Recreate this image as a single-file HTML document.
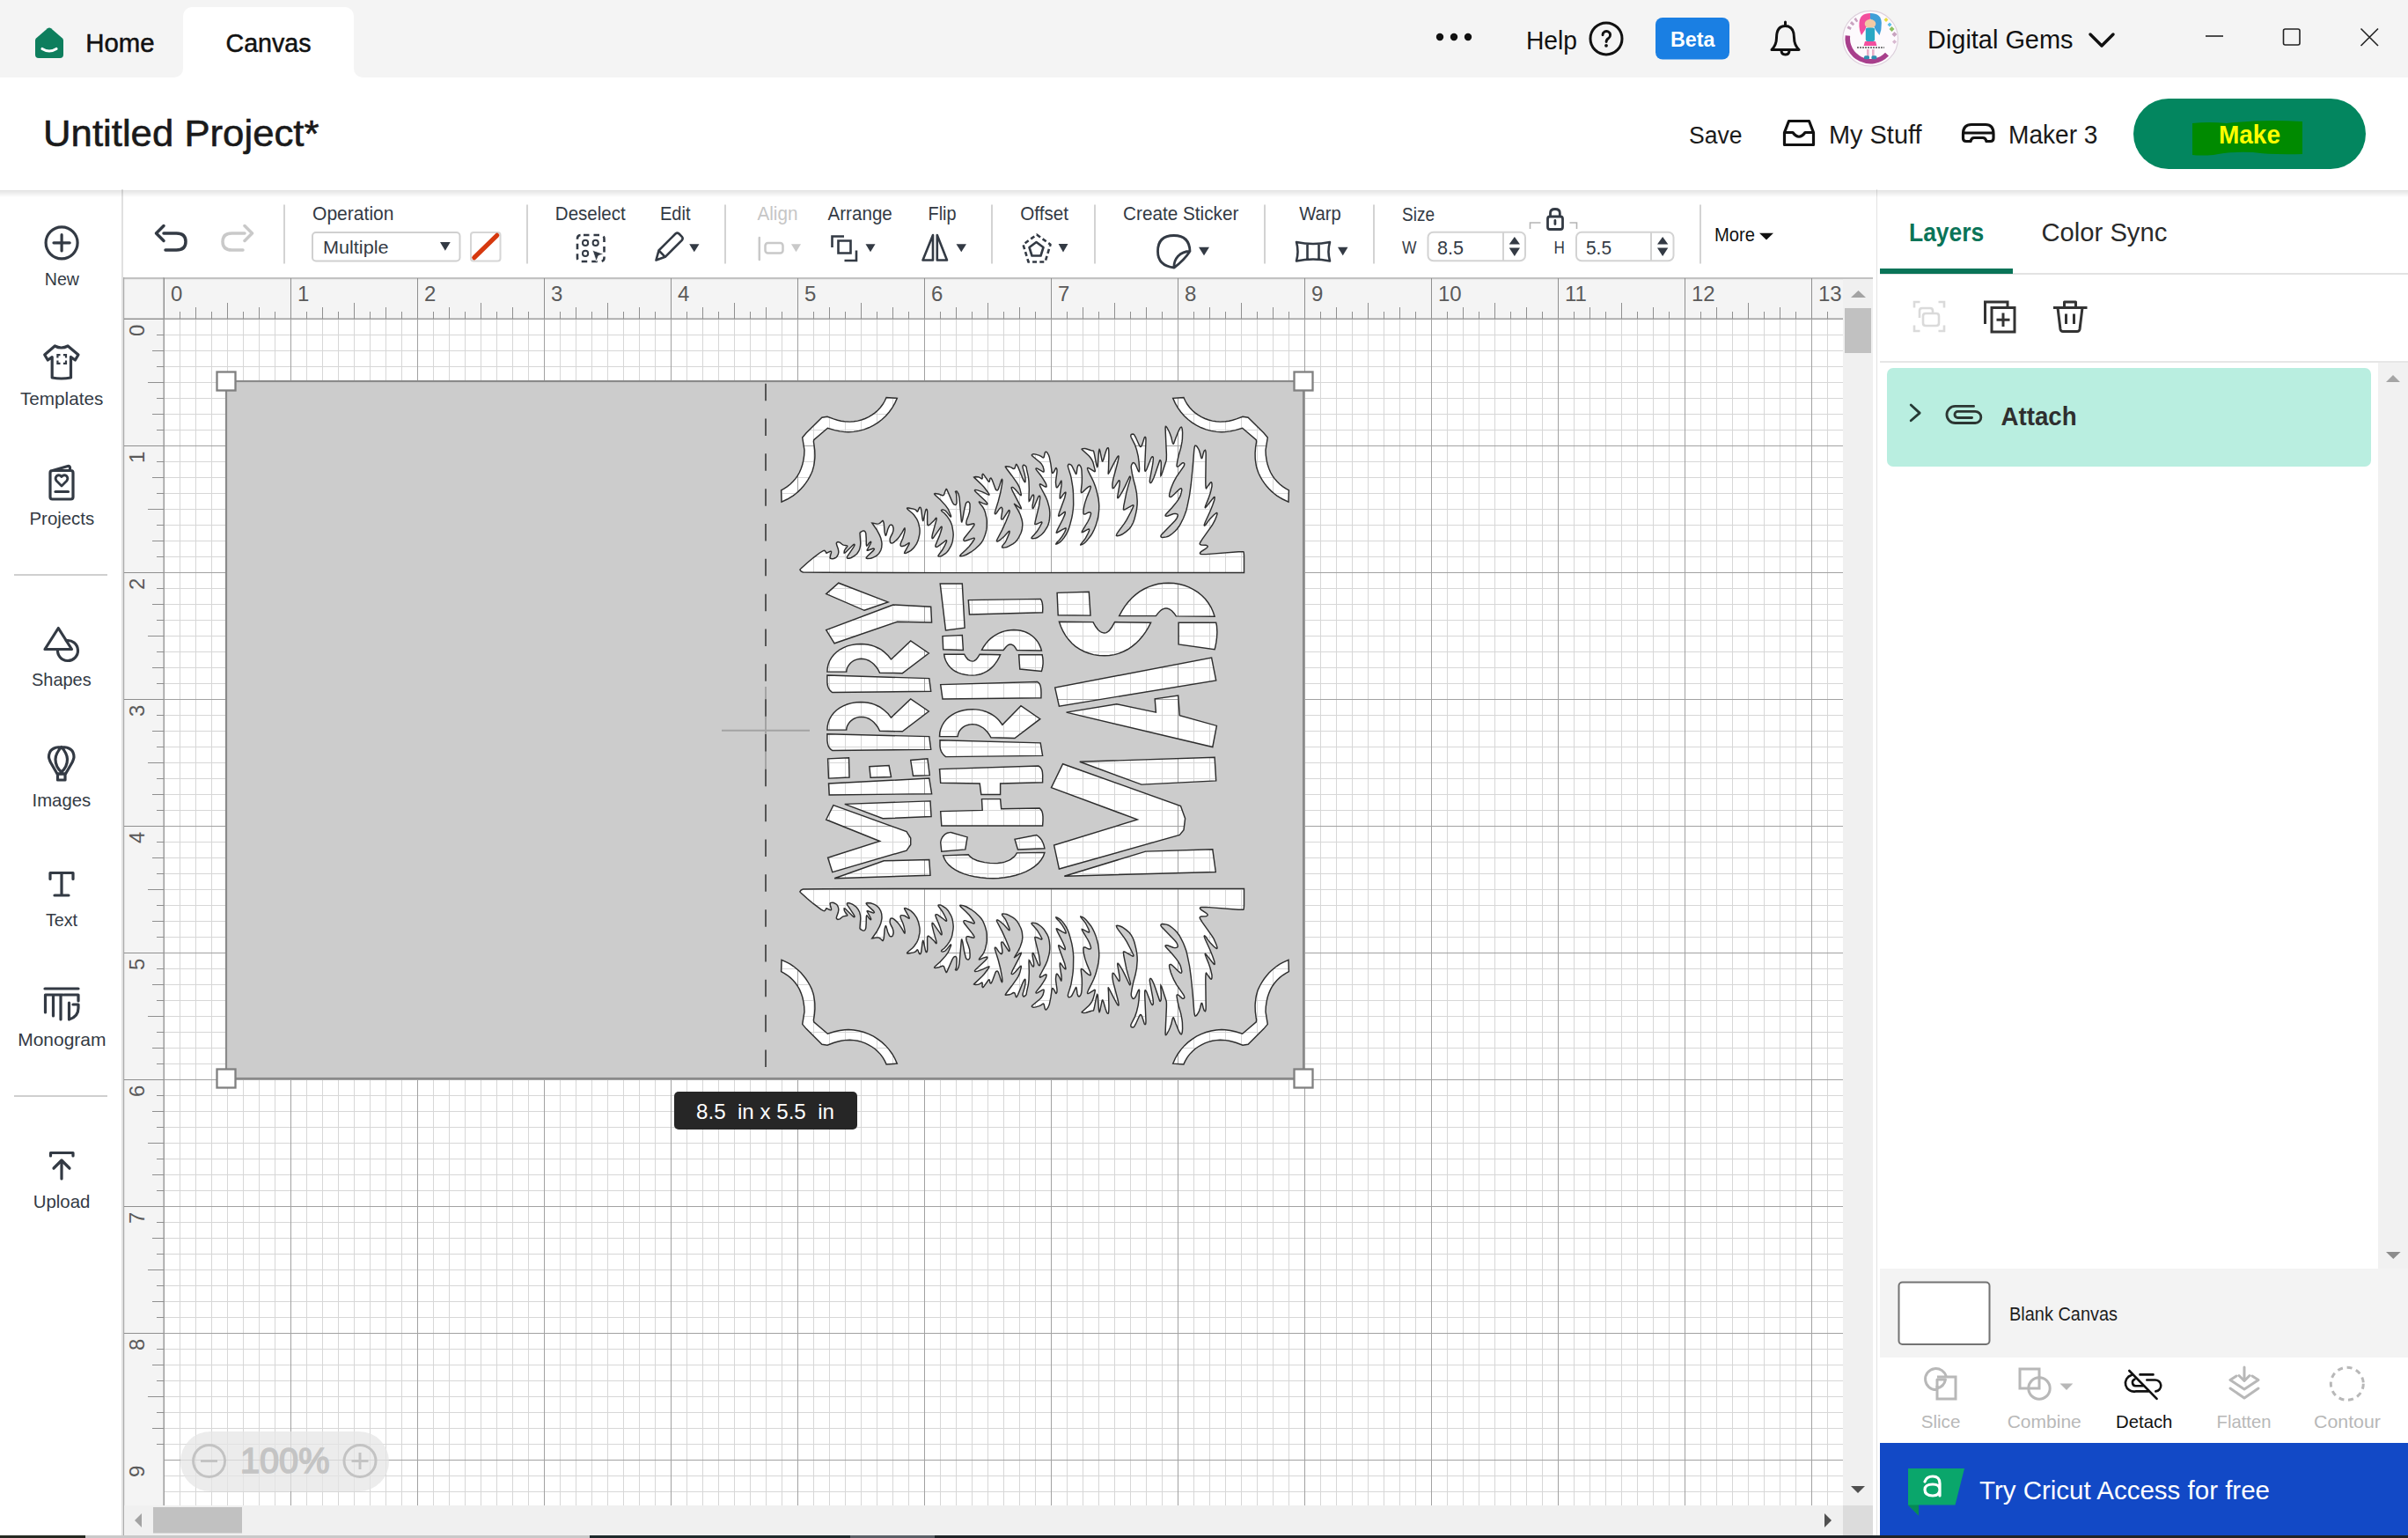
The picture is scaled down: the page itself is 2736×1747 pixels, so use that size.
<!DOCTYPE html>
<html><head><meta charset="utf-8"><title>Cricut Design Space - Canvas</title>
<style>
html,body{margin:0;padding:0;width:2736px;height:1747px;overflow:hidden;background:#fff;font-family:"Liberation Sans",sans-serif;}
.a{position:absolute;box-sizing:border-box;}
svg.full{position:absolute;left:0;top:0;}
svg text{font-family:"Liberation Sans",sans-serif;}
</style></head><body>

<div class="a" style="left:0;top:0;width:2736px;height:88px;background:#f4f4f4"></div>
<div class="a" style="left:208px;top:8px;width:194px;height:81px;background:#fff;border-radius:10px 10px 0 0"></div>
<div class="a" style="left:0;top:88px;width:2736px;height:127px;background:#fff"></div>
<div class="a" style="left:198px;top:78px;width:10px;height:10px;background:#fff"></div><div class="a" style="left:188px;top:68px;width:20px;height:20px;background:#f4f4f4;border-radius:50%"></div><div class="a" style="left:402px;top:78px;width:10px;height:10px;background:#fff"></div><div class="a" style="left:402px;top:68px;width:20px;height:20px;background:#f4f4f4;border-radius:50%"></div>
<div class="a" style="left:0;top:215px;width:140px;height:1532px;background:#fff;border-right:2px solid #e0e0e0"></div>
<div class="a" style="left:141px;top:215px;width:1991px;height:100px;background:#fff"></div>
<div class="a" style="left:2132px;top:215px;width:604px;height:1532px;background:#fff;border-left:1px solid #e2e2e2"></div>
<div class="a" style="left:0;top:216px;width:2736px;height:8px;background:linear-gradient(rgba(0,0,0,0.11),rgba(0,0,0,0))"></div>
<svg class="full" width="2736" height="1747" viewBox="0 0 2736 1747" style="position:absolute;left:0;top:0">
<defs>
<pattern id="minor" x="186" y="362" width="18" height="18" patternUnits="userSpaceOnUse"><path d="M0,0.5H18M0.5,0V18" stroke="#d7d7d7" stroke-width="1" fill="none"/></pattern>
<pattern id="major" x="186" y="362" width="144" height="144" patternUnits="userSpaceOnUse"><path d="M0,0.5H144M0.5,0V144" stroke="#a2a2a2" stroke-width="1" fill="none"/></pattern>
</defs>
<rect x="186" y="362" width="1908" height="1348" fill="#fff"/>
<rect x="186" y="362" width="1908" height="1348" fill="url(#minor)"/>
<rect x="186" y="362" width="1908" height="1348" fill="url(#major)"/>
<rect x="141" y="315" width="1953" height="47" fill="#f4f4f4"/>
<rect x="141" y="362" width="45" height="1348" fill="#f4f4f4"/>
<rect x="140" y="315" width="1988" height="2.2" fill="#c2c2c2"/>
<rect x="140" y="315" width="1.2" height="1429" fill="#ababab"/>
<rect x="141" y="361.5" width="1953" height="1" fill="#9a9a9a"/>
<rect x="185.5" y="315" width="1" height="1395" fill="#9a9a9a"/>
<path d="M186.5,316V362M204.5,354V362M222.5,349V362M240.5,354V362M258.5,344V362M276.5,354V362M294.5,349V362M312.5,354V362M330.5,316V362M348.5,354V362M366.5,349V362M384.5,354V362M402.5,344V362M420.5,354V362M438.5,349V362M456.5,354V362M474.5,316V362M492.5,354V362M510.5,349V362M528.5,354V362M546.5,344V362M564.5,354V362M582.5,349V362M600.5,354V362M618.5,316V362M636.5,354V362M654.5,349V362M672.5,354V362M690.5,344V362M708.5,354V362M726.5,349V362M744.5,354V362M762.5,316V362M780.5,354V362M798.5,349V362M816.5,354V362M834.5,344V362M852.5,354V362M870.5,349V362M888.5,354V362M906.5,316V362M924.5,354V362M942.5,349V362M960.5,354V362M978.5,344V362M996.5,354V362M1014.5,349V362M1032.5,354V362M1050.5,316V362M1068.5,354V362M1086.5,349V362M1104.5,354V362M1122.5,344V362M1140.5,354V362M1158.5,349V362M1176.5,354V362M1194.5,316V362M1212.5,354V362M1230.5,349V362M1248.5,354V362M1266.5,344V362M1284.5,354V362M1302.5,349V362M1320.5,354V362M1338.5,316V362M1356.5,354V362M1374.5,349V362M1392.5,354V362M1410.5,344V362M1428.5,354V362M1446.5,349V362M1464.5,354V362M1482.5,316V362M1500.5,354V362M1518.5,349V362M1536.5,354V362M1554.5,344V362M1572.5,354V362M1590.5,349V362M1608.5,354V362M1626.5,316V362M1644.5,354V362M1662.5,349V362M1680.5,354V362M1698.5,344V362M1716.5,354V362M1734.5,349V362M1752.5,354V362M1770.5,316V362M1788.5,354V362M1806.5,349V362M1824.5,354V362M1842.5,344V362M1860.5,354V362M1878.5,349V362M1896.5,354V362M1914.5,316V362M1932.5,354V362M1950.5,349V362M1968.5,354V362M1986.5,344V362M2004.5,354V362M2022.5,349V362M2040.5,354V362M2058.5,316V362M2076.5,354V362M2094.5,349V362M141,362.5H186M178,380.5H186M173,398.5H186M178,416.5H186M168,434.5H186M178,452.5H186M173,470.5H186M178,488.5H186M141,506.5H186M178,524.5H186M173,542.5H186M178,560.5H186M168,578.5H186M178,596.5H186M173,614.5H186M178,632.5H186M141,650.5H186M178,668.5H186M173,686.5H186M178,704.5H186M168,722.5H186M178,740.5H186M173,758.5H186M178,776.5H186M141,794.5H186M178,812.5H186M173,830.5H186M178,848.5H186M168,866.5H186M178,884.5H186M173,902.5H186M178,920.5H186M141,938.5H186M178,956.5H186M173,974.5H186M178,992.5H186M168,1010.5H186M178,1028.5H186M173,1046.5H186M178,1064.5H186M141,1082.5H186M178,1100.5H186M173,1118.5H186M178,1136.5H186M168,1154.5H186M178,1172.5H186M173,1190.5H186M178,1208.5H186M141,1226.5H186M178,1244.5H186M173,1262.5H186M178,1280.5H186M168,1298.5H186M178,1316.5H186M173,1334.5H186M178,1352.5H186M141,1370.5H186M178,1388.5H186M173,1406.5H186M178,1424.5H186M168,1442.5H186M178,1460.5H186M173,1478.5H186M178,1496.5H186M141,1514.5H186M178,1532.5H186M173,1550.5H186M178,1568.5H186M168,1586.5H186M178,1604.5H186M173,1622.5H186M178,1640.5H186" stroke="#8f8f8f" stroke-width="1" fill="none"/>
<text x="194.0" y="341.5" font-size="23.98" fill="#5a5a5a" font-weight="normal" >0</text>
<text x="338.0" y="341.5" font-size="23.98" fill="#5a5a5a" font-weight="normal" >1</text>
<text x="482.0" y="341.5" font-size="23.98" fill="#5a5a5a" font-weight="normal" >2</text>
<text x="626.0" y="341.5" font-size="23.98" fill="#5a5a5a" font-weight="normal" >3</text>
<text x="770.0" y="341.5" font-size="23.98" fill="#5a5a5a" font-weight="normal" >4</text>
<text x="914.0" y="341.5" font-size="23.98" fill="#5a5a5a" font-weight="normal" >5</text>
<text x="1058.0" y="341.5" font-size="23.98" fill="#5a5a5a" font-weight="normal" >6</text>
<text x="1202.0" y="341.5" font-size="23.98" fill="#5a5a5a" font-weight="normal" >7</text>
<text x="1346.0" y="341.5" font-size="23.98" fill="#5a5a5a" font-weight="normal" >8</text>
<text x="1490.0" y="341.5" font-size="23.98" fill="#5a5a5a" font-weight="normal" >9</text>
<text x="1634.0" y="341.5" font-size="23.98" fill="#5a5a5a" font-weight="normal" >10</text>
<text x="1778.0" y="341.5" font-size="23.98" fill="#5a5a5a" font-weight="normal" >11</text>
<text x="1922.0" y="341.5" font-size="23.98" fill="#5a5a5a" font-weight="normal" >12</text>
<text x="2066.0" y="341.5" font-size="23.98" fill="#5a5a5a" font-weight="normal" >13</text>
<g transform="translate(164,382) rotate(-90)"><text x="0.0" y="0.0" font-size="23.98" fill="#5a5a5a" font-weight="normal" >0</text></g>
<g transform="translate(164,526) rotate(-90)"><text x="0.0" y="0.0" font-size="23.98" fill="#5a5a5a" font-weight="normal" >1</text></g>
<g transform="translate(164,670) rotate(-90)"><text x="0.0" y="0.0" font-size="23.98" fill="#5a5a5a" font-weight="normal" >2</text></g>
<g transform="translate(164,814) rotate(-90)"><text x="0.0" y="0.0" font-size="23.98" fill="#5a5a5a" font-weight="normal" >3</text></g>
<g transform="translate(164,958) rotate(-90)"><text x="0.0" y="0.0" font-size="23.98" fill="#5a5a5a" font-weight="normal" >4</text></g>
<g transform="translate(164,1102) rotate(-90)"><text x="0.0" y="0.0" font-size="23.98" fill="#5a5a5a" font-weight="normal" >5</text></g>
<g transform="translate(164,1246) rotate(-90)"><text x="0.0" y="0.0" font-size="23.98" fill="#5a5a5a" font-weight="normal" >6</text></g>
<g transform="translate(164,1390) rotate(-90)"><text x="0.0" y="0.0" font-size="23.98" fill="#5a5a5a" font-weight="normal" >7</text></g>
<g transform="translate(164,1534) rotate(-90)"><text x="0.0" y="0.0" font-size="23.98" fill="#5a5a5a" font-weight="normal" >8</text></g>
<g transform="translate(164,1678) rotate(-90)"><text x="0.0" y="0.0" font-size="23.98" fill="#5a5a5a" font-weight="normal" >9</text></g>
<rect x="2094" y="317" width="34" height="1393" fill="#f0f0f0"/>
<path d="M2103,338 L2111.5,330 L2120,338Z" fill="#a3a3a3"/>
<rect x="2096" y="350" width="30" height="51" fill="#c1c1c1"/>
<path d="M2103,1688 L2119,1688 L2111,1696Z" fill="#505050"/>
<rect x="141" y="1710" width="1953" height="34" fill="#f0f0f0"/>
<path d="M161,1719 L161,1735 L153,1727Z" fill="#a3a3a3"/>
<rect x="174" y="1712" width="101" height="29.5" fill="#c1c1c1"/>
<path d="M2073,1719 L2073,1735 L2081,1727Z" fill="#505050"/>
<rect x="2094" y="1710" width="34" height="34" fill="#dcdcdc"/>
<path d="M257,433H1481V1225H257Z M901.1,563.1 904.2,560.7 907.2,558.1 910.1,555.3 912.8,552.2 915.4,548.9 917.8,545.3 920.1,541.4 922.1,537.3 923.1,534.8 924.6,529.4 925.1,526.6 925.8,520.6 925.9,517.6 925.7,511.3 924.9,505.0 924.4,501.8 924.7,499.6 940.4,486.2 948.4,488.6 954.2,489.9 960.0,490.6 964.0,490.8 970.1,490.4 976.0,489.4 981.7,487.9 987.2,485.8 992.5,483.2 997.4,480.1 1002.1,476.5 1006.4,472.5 1010.3,468.0 1013.8,463.2 1016.8,457.9 1019.3,452.3 1007.1,451.5 1005.2,455.5 1003.0,459.3 1000.4,462.8 997.4,466.0 994.2,468.9 990.6,471.4 986.9,473.6 982.9,475.5 978.7,477.0 974.5,478.1 970.1,478.8 965.6,479.1 959.6,478.8 955.6,478.2 951.5,477.2 947.2,475.9 940.0,473.2 933.9,474.2 916.1,491.8 911.7,497.0 914.0,511.3 913.7,517.1 912.9,522.6 911.8,527.6 910.2,532.3 908.4,536.5 906.2,540.4 903.7,543.9 900.9,547.1 897.9,550.0 894.6,552.6 891.2,554.8 887.6,556.8 888.0,570.1 894.6,567.0 901.1,563.1ZM982.0,693.3 1009.0,683.9 952.8,662.2 938.7,674.6 982.0,693.3ZM1014.8,687.0 938.7,715.6 948.1,730.8 1019.5,706.2 1058.6,706.9 1057.7,689.3 1014.8,687.0ZM965.4,754.3 966.8,752.8 968.4,751.5 970.1,750.4 972.0,749.6 974.1,748.9 976.2,748.5 978.5,748.3 980.9,748.5 983.2,748.9 985.4,749.6 987.4,750.5 991.2,753.0 992.9,754.5 995.9,758.0 997.3,760.0 999.6,764.3 1025.4,764.7 1055.3,742.0 1034.7,728.0 1012.5,749.0 1009.1,744.7 1004.7,740.6 1002.2,738.7 999.5,737.0 996.5,735.5 993.3,734.1 989.9,733.0 986.3,732.2 982.5,731.7 978.5,731.5 972.9,731.8 967.5,732.6 962.6,733.9 958.1,735.8 954.0,738.0 950.4,740.7 947.3,743.7 944.7,747.1 942.6,750.7 941.1,754.6 940.2,758.8 939.9,763.1 961.7,763.1 961.9,761.2 962.4,759.3 963.2,757.5 964.2,755.8 965.4,754.3ZM940.8,780.2 941.8,782.4 943.1,784.3 944.8,785.9 945.8,786.5 1057.7,785.3 1055.8,770.6 939.9,767.1 939.9,775.1 940.2,777.8 940.8,780.2ZM964.2,821.9 965.4,820.3 966.8,818.8 968.4,817.6 970.1,816.5 972.0,815.6 974.1,814.9 976.2,814.5 978.5,814.4 980.9,814.5 983.2,814.9 985.4,815.6 987.4,816.5 991.2,819.0 992.9,820.5 995.9,824.0 997.3,826.0 999.6,830.3 1025.4,830.8 1055.3,808.0 1034.7,794.0 1012.5,815.1 1009.1,810.8 1004.7,806.7 1002.2,804.8 999.5,803.0 996.5,801.5 993.3,800.1 989.9,799.0 986.3,798.2 982.5,797.7 978.5,797.5 972.9,797.8 967.5,798.6 962.6,800.0 958.1,801.8 954.0,804.1 950.4,806.7 947.3,809.8 944.7,813.1 942.6,816.8 941.1,820.7 940.2,824.8 939.9,829.1 961.7,829.1 961.9,827.2 962.4,825.3 963.2,823.6 964.2,821.9ZM940.5,845.1 941.2,847.4 942.4,849.5 943.9,851.2 945.8,852.5 1057.7,851.4 1055.8,836.6 939.9,833.8 939.9,841.1 940.5,845.1ZM941.5,884.1 965.0,883.0 964.5,860.7 940.6,861.9 941.5,884.1ZM1012.5,882.5 1010.1,869.6 987.9,870.8 989.1,883.2 1012.5,882.5ZM1058.6,901.7 1055.8,884.1 941.5,890.0 942.2,902.9 1058.6,901.7ZM1003.1,929.8 1058.1,927.5 1057.0,909.9 959.8,913.4 1003.1,929.8ZM1034.7,959.5 1034.7,952.0 1030.0,944.5 946.9,914.6 938.7,931.0 999.6,955.5 940.6,974.3 945.8,990.7 1030.0,966.1 1034.7,959.5ZM1057.0,994.2 1055.8,976.6 1004.3,977.8 948.1,997.7 1057.0,994.2ZM906.2,1120.0 908.4,1123.9 910.2,1128.1 911.8,1132.8 912.9,1137.8 913.7,1143.3 914.0,1149.1 911.7,1163.4 916.1,1168.6 933.9,1186.2 940.0,1187.2 947.2,1184.5 951.5,1183.2 955.6,1182.2 959.6,1181.6 965.6,1181.3 970.1,1181.6 974.5,1182.3 978.7,1183.4 982.9,1184.9 986.9,1186.8 990.6,1189.0 994.2,1191.5 997.4,1194.4 1000.4,1197.6 1003.0,1201.1 1005.2,1204.9 1007.1,1208.9 1019.3,1208.1 1016.8,1202.5 1013.8,1197.2 1010.3,1192.4 1006.4,1187.9 1002.1,1183.9 997.4,1180.3 992.5,1177.2 987.2,1174.6 981.7,1172.5 976.0,1171.0 970.1,1170.0 964.0,1169.6 960.0,1169.8 954.2,1170.5 948.4,1171.8 940.4,1174.2 924.7,1160.8 924.4,1158.6 925.4,1152.2 925.9,1145.9 925.8,1139.8 925.5,1136.8 924.6,1131.0 923.9,1128.3 922.1,1123.1 920.1,1119.0 917.8,1115.1 915.4,1111.5 912.8,1108.2 910.1,1105.1 907.2,1102.3 904.2,1099.7 901.1,1097.3 897.9,1095.2 894.6,1093.4 888.0,1090.3 887.6,1103.6 891.2,1105.6 894.6,1107.8 897.9,1110.4 900.9,1113.3 903.7,1116.5 906.2,1120.0ZM908.7,646.6 909.9,648.6 911.4,649.5 912.6,650.1 937.5,650.3 1085.4,650.6 1413.5,650.5 1413.5,631.4 1413.3,628.5 1413.1,627.2 1412.7,626.8 1407.2,626.8 1370.4,629.6 1367.2,629.6 1364.9,629.5 1363.8,629.1 1363.4,628.4 1363.7,627.7 1364.7,626.6 1369.3,623.6 1370.9,622.5 1371.9,621.4 1372.2,620.7 1371.8,620.0 1371.2,619.6 1370.1,619.3 1364.9,619.0 1363.9,618.7 1363.4,618.3 1363.2,617.6 1363.5,616.6 1365.9,612.6 1377.6,596.2 1380.3,591.2 1381.8,587.6 1383.0,583.9 1383.0,583.0 1382.6,582.5 1382.0,582.6 1379.3,584.7 1375.0,589.2 1373.4,591.1 1369.8,596.2 1369.0,596.9 1368.6,597.1 1368.2,596.7 1368.4,595.6 1369.3,593.3 1375.0,580.8 1377.7,574.1 1379.7,568.2 1380.2,565.4 1380.0,564.6 1379.7,564.5 1379.0,565.0 1370.5,575.8 1369.4,576.6 1369.2,576.3 1369.4,575.4 1370.1,573.4 1373.0,566.4 1375.1,560.3 1375.8,557.7 1377.0,552.3 1377.0,549.3 1376.6,548.2 1376.3,547.8 1375.7,548.0 1375.0,548.6 1373.1,551.2 1370.6,554.9 1370.2,554.4 1369.9,551.4 1369.8,546.7 1370.2,516.7 1370.1,513.8 1369.8,511.9 1369.4,511.3 1368.6,511.7 1368.1,512.4 1367.0,515.8 1366.2,519.2 1365.7,520.5 1365.1,520.5 1364.6,519.2 1363.8,515.8 1362.5,511.6 1361.8,510.0 1359.9,507.1 1359.1,506.4 1358.6,506.1 1357.8,506.1 1357.3,507.4 1356.8,510.6 1355.3,529.3 1354.1,542.0 1353.2,550.7 1351.5,562.8 1349.0,575.2 1347.8,580.0 1346.1,584.8 1344.5,588.8 1341.8,594.1 1339.9,597.5 1337.5,600.7 1335.2,603.2 1331.8,606.2 1329.6,607.9 1327.2,609.3 1325.2,609.9 1322.6,610.3 1321.1,610.4 1319.9,610.3 1319.3,609.9 1318.9,609.1 1319.0,608.4 1319.8,607.2 1334.8,591.8 1336.4,589.8 1337.4,588.2 1338.1,586.3 1338.3,585.2 1338.0,584.3 1337.3,583.9 1335.8,583.5 1334.5,583.4 1332.9,583.7 1327.0,586.0 1325.7,586.3 1324.9,586.3 1324.1,585.9 1324.1,585.3 1324.7,584.3 1331.8,576.5 1336.8,570.4 1338.6,567.8 1340.2,565.2 1341.2,562.9 1342.1,559.9 1342.8,556.7 1342.7,555.8 1342.4,555.0 1341.9,554.8 1341.3,554.9 1340.5,555.4 1338.1,557.5 1333.0,562.5 1331.6,563.7 1330.5,564.5 1329.7,564.6 1328.9,564.2 1328.6,563.6 1328.6,562.2 1328.9,560.5 1330.3,555.3 1332.2,550.5 1333.7,547.1 1336.7,541.6 1344.7,530.2 1345.4,528.9 1345.8,527.1 1345.7,526.5 1345.3,526.1 1344.6,525.7 1343.9,525.8 1343.0,526.2 1339.6,529.3 1338.8,529.9 1338.1,530.1 1337.4,530.1 1337.1,529.6 1337.1,528.1 1337.4,526.0 1338.1,522.2 1339.5,516.2 1341.7,508.6 1343.0,501.9 1343.4,498.7 1343.6,491.5 1343.3,487.6 1342.6,485.4 1342.2,485.1 1341.7,485.3 1341.0,486.0 1339.4,488.8 1336.0,497.2 1333.7,503.6 1333.2,504.3 1332.6,503.9 1332.1,502.4 1330.8,496.7 1329.3,492.4 1328.1,489.7 1325.9,485.6 1324.9,484.5 1324.4,484.4 1324.2,485.3 1324.1,486.9 1325.4,516.2 1325.3,522.2 1324.9,523.7 1320.5,537.3 1319.3,540.2 1318.9,540.6 1318.8,538.2 1319.3,530.7 1319.3,525.5 1319.1,524.1 1318.5,523.0 1318.1,522.6 1317.7,522.9 1312.9,537.2 1310.9,542.7 1308.9,546.9 1308.2,548.0 1307.5,548.6 1307.0,548.6 1306.5,547.8 1306.3,546.7 1306.5,544.6 1309.5,528.4 1310.1,524.6 1310.4,520.7 1310.3,519.7 1309.9,518.9 1309.6,518.6 1309.2,518.6 1308.3,519.7 1307.7,520.7 1302.7,533.5 1302.0,534.6 1301.3,535.3 1300.9,534.9 1300.7,532.9 1300.7,530.0 1302.0,500.6 1301.9,497.9 1301.6,496.6 1301.1,496.3 1300.6,496.5 1300.1,497.5 1297.7,505.1 1296.5,507.3 1295.8,507.4 1295.0,506.7 1294.2,505.2 1290.4,496.8 1288.8,493.9 1287.9,493.2 1287.2,493.1 1285.4,493.5 1285.0,494.0 1284.8,495.5 1285.1,496.5 1289.6,505.4 1291.5,511.0 1293.2,518.2 1294.1,525.0 1294.6,532.6 1294.4,535.6 1294.1,535.9 1293.7,535.6 1293.1,534.5 1290.4,528.0 1289.5,526.6 1288.9,526.0 1288.0,525.6 1287.4,525.7 1286.8,526.1 1285.6,528.2 1285.3,529.5 1285.3,531.5 1286.3,537.7 1287.7,544.1 1290.0,552.7 1291.5,560.4 1292.2,569.3 1292.1,573.2 1291.6,578.0 1290.7,582.6 1289.0,589.5 1287.5,593.8 1285.4,597.7 1283.3,600.5 1279.8,603.6 1277.4,605.4 1274.9,607.0 1272.6,608.0 1269.5,608.8 1268.4,608.5 1268.8,606.7 1270.6,603.9 1277.5,594.7 1280.2,590.4 1285.1,581.0 1286.6,577.9 1288.0,574.4 1287.8,573.9 1287.5,573.7 1286.8,573.9 1278.0,578.8 1277.2,579.0 1276.7,579.0 1276.4,578.7 1276.8,574.5 1279.9,559.3 1282.0,551.6 1284.0,545.1 1284.5,543.2 1284.5,542.2 1283.9,541.2 1283.6,541.2 1283.4,541.5 1278.3,552.4 1275.4,558.1 1271.4,564.6 1270.6,565.5 1270.1,565.8 1269.8,565.4 1269.7,564.4 1272.1,550.3 1272.3,546.6 1271.7,545.6 1271.4,545.6 1271.0,545.9 1266.6,552.9 1265.3,554.4 1264.6,554.7 1264.2,554.5 1264.0,553.7 1263.9,550.0 1264.8,544.3 1270.2,524.0 1271.1,519.3 1271.1,518.2 1270.8,517.9 1270.2,518.2 1269.3,519.4 1265.8,525.8 1260.7,535.9 1259.1,538.5 1259.5,532.7 1259.9,517.7 1259.8,512.1 1259.6,510.2 1259.4,509.2 1259.1,508.7 1258.7,508.7 1258.0,509.2 1257.5,510.1 1256.1,514.0 1253.8,521.9 1252.8,524.1 1252.4,523.9 1251.9,522.4 1249.9,512.5 1249.4,510.9 1249.1,510.5 1248.8,511.2 1248.5,512.5 1248.3,515.0 1247.2,529.4 1246.9,530.4 1246.6,530.6 1245.7,527.5 1243.3,515.2 1242.7,512.9 1242.1,512.0 1240.7,511.9 1239.4,511.5 1234.0,509.7 1232.5,509.5 1230.0,509.6 1229.4,509.8 1229.1,510.1 1229.3,510.5 1237.2,517.8 1239.1,520.0 1240.8,522.7 1242.0,525.4 1244.2,533.8 1244.3,534.8 1244.2,535.5 1243.7,535.7 1242.7,535.2 1237.5,531.8 1236.4,531.4 1235.9,531.5 1235.5,532.2 1235.8,533.4 1236.7,535.7 1240.9,543.9 1242.7,547.7 1244.4,552.2 1245.7,556.4 1247.2,562.6 1248.1,566.8 1248.6,571.3 1248.8,575.1 1248.6,580.3 1248.2,584.0 1247.5,588.3 1246.5,592.1 1244.8,597.6 1243.3,601.3 1241.4,605.1 1239.5,608.3 1236.3,612.4 1234.3,614.8 1232.3,616.8 1230.7,617.9 1228.6,618.8 1227.8,618.9 1227.8,618.4 1232.0,613.3 1233.5,611.2 1236.2,606.0 1237.6,602.7 1237.7,601.8 1237.5,601.1 1237.1,601.0 1236.2,601.2 1230.7,604.2 1229.3,604.6 1229.3,604.0 1230.1,602.3 1236.0,592.5 1237.4,589.8 1238.3,587.8 1239.5,584.0 1239.5,582.9 1239.2,582.3 1238.3,582.0 1237.5,582.0 1236.4,582.2 1233.4,583.8 1232.3,584.1 1231.5,584.0 1231.1,583.4 1230.9,582.0 1231.1,578.8 1231.5,576.7 1232.9,570.6 1235.2,564.1 1238.4,556.5 1239.4,553.2 1239.2,552.5 1238.9,552.3 1238.4,552.3 1236.5,553.2 1234.4,554.8 1230.5,558.6 1229.0,559.5 1228.5,559.5 1228.3,558.9 1228.3,557.4 1229.3,548.7 1229.4,542.0 1229.0,534.3 1228.6,531.9 1228.1,530.4 1226.7,528.3 1226.1,528.1 1225.5,528.2 1224.8,528.9 1224.0,531.3 1223.4,536.2 1223.1,537.7 1222.7,538.4 1222.2,538.1 1217.9,529.2 1217.1,528.2 1216.3,527.6 1214.7,527.2 1214.1,527.4 1213.4,528.7 1213.4,529.7 1213.8,531.4 1216.4,539.7 1217.2,543.2 1218.7,552.3 1219.2,556.4 1219.5,561.3 1219.7,572.9 1219.4,577.8 1218.7,583.2 1217.8,588.1 1216.0,595.0 1214.7,599.4 1213.1,603.6 1211.5,606.8 1209.1,610.6 1207.3,612.9 1205.4,614.9 1203.6,616.3 1201.0,617.7 1199.9,618.0 1199.9,617.4 1201.0,616.1 1203.6,613.4 1206.9,609.2 1209.7,604.5 1211.0,601.5 1211.2,600.7 1211.0,600.0 1210.4,600.0 1207.4,601.4 1201.2,605.0 1200.5,605.2 1200.2,605.0 1201.4,601.8 1207.6,589.8 1209.7,584.9 1210.3,582.8 1210.3,581.8 1210.0,581.4 1209.3,581.6 1203.5,586.0 1202.9,586.2 1202.6,585.8 1203.4,582.8 1209.7,565.5 1211.0,559.8 1210.8,559.2 1210.4,559.2 1209.6,559.8 1208.0,561.6 1205.7,565.0 1205.0,565.8 1204.4,566.0 1204.2,565.3 1204.3,562.1 1206.0,551.4 1206.2,548.0 1206.0,546.7 1205.9,546.1 1205.6,546.1 1203.6,550.3 1201.7,553.2 1200.9,553.8 1200.3,553.5 1200.0,552.4 1199.5,548.0 1199.7,545.4 1201.0,536.2 1201.0,534.2 1200.9,533.0 1200.0,531.6 1199.6,531.7 1197.7,535.5 1196.3,537.4 1195.8,537.5 1195.3,536.6 1195.0,535.1 1193.9,527.1 1192.3,519.2 1191.6,517.2 1189.9,514.2 1189.2,513.5 1188.6,513.1 1188.2,513.1 1187.3,514.2 1186.3,518.6 1186.0,519.5 1185.4,519.9 1184.6,519.7 1183.4,518.7 1181.0,517.3 1177.0,516.1 1174.3,515.7 1173.4,515.9 1172.6,516.4 1172.3,516.9 1172.6,517.5 1173.3,518.3 1181.7,525.2 1183.1,526.7 1184.3,528.5 1185.1,530.1 1186.1,533.9 1186.1,535.6 1185.8,535.9 1185.2,535.9 1184.1,535.4 1179.0,532.3 1177.9,531.9 1177.3,531.9 1177.0,532.4 1177.1,533.1 1177.8,534.2 1182.3,539.8 1185.1,543.8 1187.8,548.3 1188.6,549.9 1189.1,552.5 1188.8,553.0 1188.0,553.0 1186.8,552.5 1183.3,550.4 1182.3,550.0 1181.7,549.9 1181.4,550.3 1181.3,550.8 1182.1,552.9 1183.2,555.0 1187.9,563.8 1190.1,569.0 1192.0,575.9 1192.5,578.9 1192.8,582.3 1192.8,585.4 1192.4,589.9 1191.9,592.9 1191.0,596.1 1189.8,598.7 1186.2,604.3 1184.4,606.3 1182.8,607.8 1178.7,610.5 1176.8,611.3 1175.2,611.6 1173.0,611.8 1172.1,611.5 1172.1,610.7 1173.0,609.5 1175.2,607.3 1178.5,603.3 1182.0,597.5 1183.8,594.1 1183.9,593.4 1183.6,593.0 1183.1,593.0 1180.9,593.8 1177.7,595.3 1176.7,595.6 1176.2,595.6 1175.8,595.2 1176.4,591.7 1180.5,574.9 1181.7,566.0 1181.7,564.3 1181.5,563.5 1181.0,563.2 1180.6,563.3 1180.0,564.0 1175.1,575.3 1174.4,576.7 1173.8,577.5 1173.4,577.5 1173.1,576.8 1173.1,574.3 1174.5,566.8 1174.7,563.9 1174.4,562.3 1174.1,562.1 1173.8,562.1 1173.3,562.4 1172.3,563.8 1169.9,568.7 1169.2,569.3 1169.0,566.8 1169.3,556.1 1169.0,546.7 1168.4,541.6 1166.6,533.7 1166.1,530.3 1165.2,529.3 1163.6,528.1 1163.0,528.1 1162.6,528.5 1162.1,529.3 1162.0,530.2 1162.2,531.6 1164.2,538.3 1164.9,542.2 1165.1,546.0 1164.9,547.5 1164.5,547.7 1163.7,546.8 1162.1,543.7 1156.7,530.4 1155.3,527.7 1154.8,527.4 1154.5,527.5 1154.1,528.2 1153.3,531.1 1152.8,532.1 1151.9,532.4 1151.0,532.2 1149.3,531.2 1146.9,530.2 1143.2,529.8 1142.3,530.0 1142.3,530.3 1143.8,532.5 1149.6,540.2 1155.4,548.4 1156.8,550.7 1158.0,553.1 1158.8,555.2 1160.3,561.3 1160.2,562.7 1159.9,562.8 1158.2,561.3 1153.4,555.8 1151.3,553.8 1150.5,553.4 1149.9,553.4 1149.3,553.7 1149.2,554.4 1150.4,557.7 1159.4,574.9 1160.4,577.3 1160.2,577.7 1158.6,576.9 1152.1,572.1 1152.9,573.1 1156.8,579.6 1159.2,584.5 1161.0,590.0 1161.5,592.3 1161.8,594.9 1161.7,597.2 1161.4,600.4 1160.9,602.8 1160.0,605.5 1157.0,611.5 1155.4,613.8 1153.3,616.0 1151.2,617.6 1145.8,620.7 1143.7,621.5 1141.9,621.9 1139.6,622.0 1138.7,621.8 1138.5,621.0 1139.1,619.9 1142.1,616.1 1143.4,613.8 1146.7,605.9 1147.1,604.4 1147.2,603.7 1146.9,603.3 1146.4,603.5 1145.5,604.3 1141.0,609.3 1137.9,612.0 1135.8,613.7 1133.6,615.0 1133.0,615.1 1132.5,614.8 1132.5,614.0 1133.1,612.5 1138.8,601.6 1142.7,593.0 1146.1,584.7 1147.2,581.3 1147.2,580.4 1146.9,579.8 1146.6,579.6 1146.2,579.7 1140.0,589.0 1139.1,589.9 1138.5,590.1 1137.8,589.8 1137.6,589.1 1137.6,587.7 1138.8,580.7 1138.9,579.0 1138.9,578.0 1138.2,576.5 1137.8,576.3 1137.3,576.5 1136.5,577.0 1135.0,578.6 1132.1,583.0 1131.3,583.7 1130.9,583.9 1130.4,583.6 1130.3,582.8 1130.6,581.1 1134.3,569.2 1136.7,559.8 1138.5,550.1 1138.9,546.0 1138.9,545.1 1138.5,544.4 1138.2,544.7 1137.5,546.1 1135.4,552.6 1134.6,554.9 1133.8,556.5 1133.1,557.0 1132.3,556.9 1131.7,556.4 1131.1,555.4 1127.9,546.7 1127.1,544.8 1126.1,543.1 1125.7,543.0 1124.9,543.7 1124.3,546.8 1124.0,547.2 1123.4,547.0 1122.5,546.0 1117.7,539.2 1116.8,538.4 1116.5,538.5 1116.0,539.5 1116.2,542.9 1116.0,543.7 1115.6,543.9 1112.6,542.1 1111.4,541.8 1108.4,541.6 1107.5,541.7 1106.6,542.0 1107.4,542.9 1115.9,550.9 1118.0,553.2 1121.8,558.2 1123.7,561.1 1124.0,561.7 1123.8,562.1 1123.3,562.0 1122.2,561.6 1116.4,558.9 1110.9,556.9 1108.6,556.4 1108.0,556.5 1107.5,556.9 1107.4,557.2 1108.4,558.6 1119.8,569.2 1121.7,571.6 1121.9,572.4 1121.7,572.8 1121.0,572.9 1117.1,571.9 1113.3,570.1 1112.8,570.0 1112.5,570.0 1112.4,570.4 1113.3,571.9 1116.3,575.5 1117.5,577.4 1118.6,579.8 1119.5,582.3 1121.0,589.0 1121.3,592.0 1121.2,598.7 1120.9,601.4 1120.2,604.5 1119.4,607.3 1117.9,611.2 1116.7,613.8 1115.0,616.5 1113.1,618.7 1108.1,623.5 1103.4,627.0 1098.1,630.0 1094.4,631.4 1091.4,631.8 1090.8,631.7 1090.7,631.4 1091.6,630.0 1097.5,624.6 1101.4,620.5 1105.2,615.5 1107.1,612.5 1107.3,611.8 1107.1,611.3 1106.9,611.1 1106.3,611.1 1096.7,614.4 1095.7,614.4 1095.2,614.0 1094.8,613.2 1095.0,612.4 1095.6,611.2 1104.8,599.6 1106.7,596.8 1107.0,596.0 1107.0,595.4 1106.8,595.0 1106.4,594.8 1104.9,595.0 1100.1,596.2 1099.1,596.3 1098.3,595.9 1098.0,595.3 1097.8,594.0 1098.3,591.0 1100.3,585.7 1101.7,581.1 1102.1,576.0 1102.0,572.7 1101.8,571.7 1100.8,570.3 1100.3,570.0 1099.7,570.0 1098.7,570.4 1098.0,571.0 1097.4,572.1 1095.8,578.2 1093.8,589.5 1093.4,591.3 1092.8,592.9 1092.5,592.7 1092.3,591.4 1092.1,589.3 1090.0,565.4 1089.4,562.5 1088.9,560.8 1087.6,558.6 1087.0,558.0 1086.5,557.9 1085.6,558.3 1085.5,558.6 1086.2,559.6 1086.4,560.5 1086.7,562.0 1087.0,567.2 1087.0,570.8 1086.9,571.8 1086.2,573.3 1085.7,573.5 1084.1,573.2 1083.3,572.3 1082.1,570.4 1075.8,555.9 1075.4,555.4 1075.1,555.4 1073.9,557.9 1072.7,561.7 1072.2,562.5 1071.4,562.8 1070.5,562.7 1066.8,561.3 1064.0,560.7 1062.3,560.6 1061.6,561.0 1061.8,561.5 1062.7,562.6 1068.5,567.8 1074.3,574.1 1077.2,578.2 1078.2,580.2 1080.6,586.1 1080.6,586.7 1080.3,587.0 1079.9,586.8 1079.1,586.1 1076.5,582.6 1074.3,580.2 1073.3,579.6 1071.2,578.9 1070.5,578.9 1069.5,579.6 1069.6,580.0 1070.1,580.7 1072.8,582.8 1075.5,585.7 1078.8,590.4 1080.0,592.6 1081.1,595.3 1081.9,597.9 1083.0,604.5 1083.2,607.5 1083.0,610.0 1082.5,613.6 1082.0,616.0 1081.2,618.6 1080.2,620.7 1077.3,625.5 1075.8,627.3 1074.3,628.7 1070.5,631.2 1069.1,631.8 1067.9,632.1 1066.5,632.1 1066.0,631.7 1066.2,630.7 1070.6,624.8 1073.0,620.7 1075.0,616.4 1075.5,615.1 1075.6,614.4 1075.4,613.9 1075.2,613.8 1074.6,614.0 1070.5,617.2 1065.5,620.8 1064.3,621.3 1063.6,621.3 1063.0,621.0 1062.8,620.3 1063.1,618.9 1067.3,608.9 1069.3,603.1 1070.2,599.6 1070.2,598.8 1069.9,598.3 1069.5,598.3 1069.0,598.7 1068.3,599.6 1060.7,610.6 1059.8,611.5 1059.3,611.6 1059.0,611.0 1058.9,610.1 1059.5,606.7 1063.8,591.2 1064.1,589.7 1064.1,588.9 1064.0,588.4 1063.8,588.3 1063.4,588.6 1061.3,591.2 1057.1,595.3 1056.0,596.2 1055.0,596.7 1054.4,596.7 1053.9,596.2 1053.7,595.2 1053.6,592.9 1053.7,581.9 1053.5,579.7 1053.2,578.7 1052.6,578.4 1052.1,578.8 1051.5,580.4 1049.6,589.2 1048.9,591.5 1048.6,591.5 1048.0,589.0 1046.8,579.4 1046.4,577.5 1045.9,576.6 1045.3,576.3 1044.8,576.4 1044.3,577.1 1042.7,580.9 1042.2,581.2 1041.6,580.8 1040.9,579.6 1039.9,578.8 1038.1,578.1 1032.4,577.0 1030.9,577.0 1030.6,577.7 1031.8,579.0 1036.9,583.3 1038.7,585.3 1041.7,589.7 1042.7,591.7 1043.6,594.1 1044.9,600.1 1045.1,602.7 1045.0,605.6 1044.5,608.3 1043.6,612.2 1042.7,614.8 1041.6,617.3 1040.3,619.4 1038.4,622.0 1036.8,623.6 1034.9,625.3 1032.9,626.5 1029.8,628.1 1028.3,628.6 1027.6,628.3 1027.8,627.3 1032.9,618.2 1033.2,617.0 1032.9,616.7 1032.0,617.1 1030.1,618.5 1028.0,619.7 1025.2,620.4 1024.2,620.4 1023.5,620.2 1023.2,619.8 1023.1,618.1 1023.5,616.8 1025.9,611.2 1027.7,605.1 1028.2,602.3 1028.2,601.4 1028.0,600.0 1027.7,600.0 1027.4,600.4 1024.8,605.1 1022.2,609.2 1019.6,612.4 1017.6,614.3 1015.1,616.3 1014.2,616.7 1012.9,617.0 1012.2,616.9 1011.7,616.3 1011.3,615.4 1011.1,612.5 1011.4,611.1 1011.9,609.9 1014.1,605.7 1015.0,602.7 1015.2,600.3 1014.5,597.8 1014.1,597.0 1013.5,596.4 1012.9,596.2 1011.9,596.2 1011.2,596.5 1010.6,597.1 1008.8,601.0 1006.9,607.7 1006.4,608.4 1006.2,608.3 1005.7,607.1 1005.1,604.3 1004.3,594.4 1003.5,592.1 1003.2,591.5 1002.7,591.5 1000.2,594.0 998.6,594.9 996.5,595.1 991.8,594.2 990.8,594.1 996.0,601.5 999.3,607.6 1000.8,611.1 1001.9,616.4 1002.0,618.1 1001.7,621.9 1000.8,625.0 998.9,628.4 997.8,629.6 996.4,630.9 994.9,631.9 990.8,633.8 989.1,634.2 985.6,634.4 984.7,634.3 984.2,633.9 984.3,633.4 985.8,631.5 992.3,625.4 993.1,624.4 993.4,623.7 993.1,623.3 992.6,623.1 991.5,623.3 986.1,625.2 985.3,625.3 985.1,625.0 989.3,617.3 989.7,616.2 989.7,615.7 989.4,615.3 989.0,615.4 987.6,616.8 985.7,619.4 984.8,620.1 984.6,619.9 984.3,618.4 984.2,611.6 983.8,606.0 983.4,604.7 983.0,604.0 982.1,603.2 981.4,602.9 980.6,602.9 978.3,604.0 977.6,604.6 977.1,605.3 977.0,606.1 977.8,616.8 977.5,620.5 976.6,624.1 975.9,625.7 973.9,628.7 972.9,629.8 970.4,631.7 967.2,633.5 965.0,634.2 963.1,634.2 962.6,634.0 962.4,633.6 962.4,632.9 962.7,632.1 969.6,621.9 970.9,619.6 971.0,618.6 970.6,618.3 970.1,618.5 969.2,619.1 960.7,627.4 959.8,628.0 959.2,628.1 959.1,627.6 959.4,625.5 960.6,623.5 962.5,621.1 962.8,620.5 962.7,620.1 961.7,619.7 958.3,619.1 957.4,618.7 954.2,616.1 952.0,615.5 951.0,616.0 950.5,616.6 950.3,617.2 950.7,619.1 952.3,623.4 952.8,626.3 952.8,627.5 952.3,629.8 950.9,632.2 950.2,633.0 949.4,633.5 947.3,634.5 945.5,634.7 943.6,634.3 943.2,633.9 943.1,633.4 943.6,630.7 944.5,627.7 944.5,626.6 944.1,626.2 943.7,626.2 943.0,626.4 939.2,628.2 938.9,628.2 938.1,626.6 937.2,625.5 936.7,625.3 935.3,625.6 931.4,628.0 924.4,633.3 917.0,639.5 910.1,645.8 909.2,646.5 908.8,646.8 908.7,646.6ZM1184.8,690.6 1184.5,686.3 1184.0,683.9 1183.3,681.9 1182.2,680.4 1100.3,681.6 1101.5,698.0 1184.6,695.7 1184.8,690.6ZM1096.1,713.2 1093.3,662.9 1068.2,662.9 1074.5,716.0 1096.1,713.2ZM1143.1,734.7 1144.4,733.5 1145.9,732.5 1147.4,732.0 1148.9,732.0 1150.6,732.6 1152.4,734.0 1154.1,736.4 1155.3,738.5 1183.4,739.0 1182.4,735.6 1181.0,732.4 1179.3,729.4 1177.3,726.7 1175.0,724.2 1172.4,722.0 1169.6,720.1 1166.5,718.5 1163.2,717.2 1159.6,716.3 1155.8,715.8 1151.8,715.6 1148.3,715.7 1144.8,716.2 1141.4,716.9 1138.0,718.0 1134.7,719.3 1131.5,721.0 1128.4,723.1 1125.4,725.4 1122.7,728.1 1120.1,731.1 1117.7,734.5 1115.5,738.3 1140.1,738.5 1143.1,734.7ZM1071.7,737.8 1094.4,738.5 1093.3,721.4 1071.0,722.6 1071.7,737.8ZM1082.5,760.6 1085.4,762.5 1088.7,764.1 1092.3,765.4 1096.2,766.3 1100.4,766.9 1105.0,767.1 1108.4,766.9 1111.8,766.3 1115.0,765.5 1118.1,764.2 1121.1,762.7 1123.8,760.8 1126.5,758.6 1128.9,756.2 1131.1,753.4 1133.2,750.4 1135.0,747.2 1136.6,743.7 1113.2,743.2 1110.8,747.1 1108.8,749.4 1106.6,750.9 1105.0,751.1 1102.4,750.6 1099.8,749.1 1097.6,746.6 1095.6,743.2 1072.7,743.2 1073.3,746.7 1074.4,750.0 1075.9,753.0 1077.7,755.8 1079.9,758.3 1082.5,760.6ZM1182.8,782.8 1182.3,779.6 1181.5,777.3 1180.3,775.7 1178.7,774.6 1068.7,777.6 1071.0,794.0 1182.9,792.8 1183.0,787.1 1182.8,782.8ZM1090.6,829.7 1091.8,828.2 1093.2,826.9 1094.8,825.7 1096.5,824.7 1098.4,823.9 1100.5,823.3 1102.7,822.9 1105.0,822.8 1107.3,822.9 1109.5,823.3 1111.6,823.9 1113.6,824.8 1117.3,827.0 1119.0,828.5 1122.1,831.8 1123.5,833.7 1126.0,837.8 1153.0,838.5 1181.8,816.7 1160.0,801.7 1138.9,823.3 1135.5,818.7 1133.4,816.6 1131.2,814.5 1128.6,812.7 1125.9,811.0 1122.9,809.5 1119.8,808.2 1116.4,807.1 1112.8,806.4 1109.0,805.9 1105.0,805.7 1099.8,806.0 1094.9,806.7 1090.2,808.0 1085.9,809.7 1081.9,811.8 1078.3,814.4 1075.2,817.3 1072.5,820.6 1070.4,824.2 1068.8,828.1 1067.8,832.2 1067.5,836.6 1088.1,836.6 1088.4,834.8 1088.9,833.0 1089.6,831.3 1090.6,829.7ZM1068.6,851.3 1069.5,853.6 1070.7,855.7 1072.4,857.7 1074.5,859.6 1184.6,858.4 1182.2,843.9 1068.0,840.8 1068.0,847.8 1068.6,851.3ZM1037.5,881.3 1056.3,880.6 1053.9,861.9 1034.7,863.5 1037.5,881.3ZM1184.6,888.8 1184.7,880.8 1184.4,877.0 1184.1,875.5 1183.7,874.2 1182.5,872.2 1181.8,871.4 1179.9,870.1 1067.5,873.6 1068.7,889.3 1113.2,890.0 1114.8,902.4 1136.6,902.4 1136.6,890.0 1184.6,888.8ZM1185.0,927.6 1184.6,924.1 1183.8,921.4 1182.6,919.5 1181.1,918.1 1137.7,918.8 1136.6,907.6 1115.5,907.6 1116.2,920.4 1068.7,921.6 1069.8,938.0 1184.6,938.0 1185.0,932.2 1185.0,927.6ZM1078.9,945.6 1076.2,946.2 1073.8,947.6 1072.8,948.5 1070.9,950.7 1069.5,953.4 1068.7,956.7 1069.8,967.3 1096.8,964.9 1099.1,950.9 1080.4,945.5 1078.9,945.6ZM1085.5,988.1 1090.1,990.5 1095.3,992.6 1101.0,994.4 1107.2,995.8 1113.9,996.8 1120.9,997.5 1128.4,997.7 1134.9,997.5 1141.3,996.8 1147.7,995.8 1154.0,994.3 1159.9,992.4 1165.6,990.1 1170.7,987.4 1175.4,984.3 1179.4,980.9 1182.7,977.1 1185.3,972.9 1186.9,968.4 1155.3,968.9 1154.3,970.6 1153.1,972.2 1151.6,973.7 1148.1,976.3 1146.1,977.4 1141.5,979.1 1139.0,979.8 1133.6,980.5 1130.7,980.6 1124.7,980.4 1118.7,979.6 1112.9,978.3 1110.2,977.5 1105.4,975.3 1103.4,973.9 1101.6,972.4 1100.3,970.8 1071.7,971.9 1073.1,975.6 1075.2,979.1 1078.0,982.4 1081.4,985.4 1085.5,988.1ZM1448.3,543.9 1445.8,540.4 1443.6,536.5 1441.8,532.3 1440.2,527.6 1439.1,522.6 1438.3,517.1 1438.0,511.3 1440.3,497.0 1435.9,491.8 1418.1,474.2 1412.0,473.2 1404.8,475.9 1400.5,477.2 1396.4,478.2 1392.4,478.8 1386.4,479.1 1381.9,478.8 1377.5,478.1 1373.3,477.0 1369.1,475.5 1365.1,473.6 1361.4,471.4 1357.8,468.9 1354.6,466.0 1351.6,462.8 1349.0,459.3 1346.8,455.5 1344.9,451.5 1332.7,452.3 1335.2,457.9 1338.2,463.2 1341.7,468.0 1345.6,472.5 1349.9,476.5 1354.6,480.1 1359.5,483.2 1364.8,485.8 1370.3,487.9 1376.0,489.4 1381.9,490.4 1388.0,490.8 1392.0,490.6 1397.8,489.9 1403.6,488.6 1411.6,486.2 1427.3,499.6 1427.6,501.8 1426.6,508.2 1426.1,514.5 1426.2,520.6 1426.5,523.6 1427.4,529.4 1428.1,532.1 1429.9,537.3 1431.9,541.4 1434.2,545.3 1436.6,548.9 1439.2,552.2 1441.9,555.3 1444.8,558.1 1447.8,560.7 1450.9,563.1 1454.1,565.2 1457.4,567.0 1464.0,570.1 1464.4,556.8 1460.8,554.8 1457.4,552.6 1454.1,550.0 1451.1,547.1 1448.3,543.9ZM1317.9,694.2 1319.8,692.7 1321.8,691.6 1324.0,691.0 1326.0,691.0 1328.6,691.8 1331.4,693.7 1334.3,696.9 1336.3,699.9 1380.1,700.3 1378.3,694.9 1376.0,689.8 1373.0,685.0 1369.6,680.5 1365.6,676.5 1361.2,672.9 1356.4,669.8 1351.2,667.1 1345.7,665.0 1339.9,663.5 1333.8,662.5 1327.4,662.2 1321.6,662.5 1316.0,663.3 1310.5,664.7 1305.1,666.6 1300.0,669.0 1295.0,671.9 1290.4,675.4 1286.0,679.3 1281.9,683.7 1278.1,688.6 1274.8,693.9 1271.7,699.6 1313.4,699.6 1316.1,696.1 1317.9,694.2ZM1239.0,699.1 1237.3,672.2 1201.1,673.4 1202.2,698.7 1239.0,699.1ZM1381.9,729.4 1382.6,723.6 1382.9,718.1 1382.5,710.9 1381.7,707.3 1339.1,707.3 1339.1,731.9 1380.1,737.8 1380.8,735.1 1381.9,729.4ZM1217.9,730.7 1222.1,734.3 1226.7,737.4 1231.7,740.0 1237.0,742.0 1242.6,743.6 1248.6,744.5 1254.9,744.8 1260.6,744.5 1266.2,743.6 1271.5,742.1 1276.6,740.0 1281.5,737.5 1286.1,734.4 1290.4,730.9 1294.4,726.9 1298.2,722.6 1301.6,717.8 1304.8,712.7 1307.6,707.3 1266.6,706.6 1263.0,712.8 1260.2,716.4 1258.2,718.0 1257.1,718.6 1254.9,719.0 1253.7,718.9 1251.4,718.2 1250.3,717.5 1248.0,715.7 1244.9,711.8 1242.0,706.6 1203.4,706.2 1205.4,711.8 1207.9,717.2 1210.8,722.1 1214.2,726.6 1217.9,730.7ZM1184.5,758.5 1185.1,753.9 1185.1,750.6 1184.8,747.2 1184.1,743.7 1157.6,743.7 1158.8,760.0 1183.4,762.4 1184.5,758.5ZM1381.7,772.9 1376.6,747.1 1198.7,781.1 1203.4,802.1 1381.7,772.9ZM1313.4,809.1 1268.9,799.8 1211.6,809.1 1377.8,848.5 1382.4,824.4 1340.3,812.7 1338.7,790.0 1312.2,793.9 1313.4,809.1ZM1297.0,891.1 1381.7,886.9 1380.1,860.2 1226.8,865.3 1297.0,891.1ZM1346.6,929.7 1341.5,915.6 1207.6,867.7 1194.5,894.6 1292.3,930.9 1197.6,960.1 1203.4,987.0 1340.3,948.4 1345.0,942.6 1346.6,929.7ZM1185.0,957.2 1183.6,954.4 1181.8,952.0 1179.8,950.0 1177.6,948.5 1153.0,953.2 1156.5,964.9 1186.9,963.7 1186.1,960.3 1185.0,957.2ZM1381.3,990.5 1377.8,964.8 1301.7,967.1 1209.3,995.2 1381.3,990.5ZM924.4,1026.7 933.0,1033.1 935.3,1034.4 936.7,1034.7 937.6,1034.1 938.9,1031.8 939.2,1031.8 943.0,1033.6 944.1,1033.8 944.5,1033.4 944.5,1032.3 943.6,1029.3 943.1,1026.6 943.2,1026.1 943.6,1025.7 944.3,1025.4 946.3,1025.3 947.3,1025.5 949.4,1026.5 950.9,1027.8 951.5,1028.7 952.3,1030.2 952.8,1032.5 952.8,1033.7 952.3,1036.6 950.7,1040.9 950.3,1042.8 950.5,1043.4 951.0,1044.0 952.0,1044.5 954.2,1043.9 957.4,1041.3 958.3,1040.9 961.7,1040.3 962.7,1039.9 962.8,1039.5 962.5,1038.9 960.6,1036.5 959.4,1034.5 959.1,1032.4 959.2,1031.9 959.8,1032.0 960.7,1032.6 969.2,1040.9 970.1,1041.5 970.6,1041.7 971.0,1041.4 970.9,1040.4 969.6,1038.1 962.7,1027.9 962.4,1027.1 962.4,1026.4 962.6,1026.0 963.1,1025.8 965.0,1025.8 966.0,1026.1 968.5,1027.2 970.4,1028.3 972.9,1030.2 975.1,1033.1 976.6,1035.9 977.5,1039.5 977.8,1043.2 977.0,1053.9 977.1,1054.7 977.6,1055.4 978.3,1056.0 980.6,1057.1 981.4,1057.1 982.1,1056.8 983.0,1056.0 983.4,1055.3 983.8,1054.0 984.2,1048.4 984.3,1041.6 984.6,1040.1 984.8,1039.9 985.1,1040.0 985.7,1040.6 987.6,1043.2 989.0,1044.6 989.4,1044.7 989.7,1044.3 989.7,1043.8 989.3,1042.7 985.1,1035.0 985.3,1034.7 986.1,1034.8 991.5,1036.7 992.6,1036.9 993.1,1036.7 993.4,1036.3 993.1,1035.6 992.3,1034.6 985.8,1028.5 984.3,1026.6 984.2,1026.1 984.7,1025.7 985.6,1025.6 989.1,1025.8 992.4,1026.9 994.9,1028.1 996.4,1029.1 997.8,1030.4 998.9,1031.6 1000.8,1035.0 1001.7,1038.1 1002.0,1041.9 1001.9,1043.6 1000.8,1048.9 999.3,1052.4 996.0,1058.5 990.8,1065.9 991.8,1065.8 996.5,1064.9 998.6,1065.1 1000.2,1066.0 1002.7,1068.5 1003.2,1068.5 1003.5,1067.9 1004.3,1065.6 1005.1,1055.7 1005.7,1052.9 1006.2,1051.7 1006.4,1051.6 1006.9,1052.3 1008.8,1059.0 1010.6,1062.9 1011.2,1063.5 1011.9,1063.8 1012.9,1063.8 1013.5,1063.6 1014.1,1063.0 1014.5,1062.2 1015.2,1059.7 1015.0,1057.3 1014.1,1054.3 1011.9,1050.1 1011.4,1048.9 1011.1,1047.5 1011.3,1044.6 1011.7,1043.7 1012.2,1043.1 1012.9,1043.0 1014.2,1043.3 1015.1,1043.7 1016.4,1044.6 1019.6,1047.6 1022.2,1050.8 1024.8,1054.9 1027.4,1059.6 1027.7,1060.0 1028.0,1060.0 1028.2,1058.6 1028.2,1057.7 1027.1,1052.4 1025.9,1048.8 1023.5,1043.2 1023.0,1041.0 1023.2,1040.2 1023.5,1039.8 1024.2,1039.6 1025.2,1039.6 1028.0,1040.3 1030.1,1041.5 1032.0,1042.9 1032.6,1043.2 1032.9,1043.3 1033.2,1043.0 1033.2,1042.6 1032.4,1040.9 1027.8,1032.7 1027.6,1031.7 1028.3,1031.4 1029.8,1031.9 1032.9,1033.5 1034.9,1034.7 1036.8,1036.4 1038.4,1038.0 1040.3,1040.6 1041.6,1042.7 1042.7,1045.2 1043.6,1047.8 1044.5,1051.7 1045.0,1054.4 1045.1,1057.3 1044.9,1059.9 1043.6,1065.9 1042.7,1068.3 1041.7,1070.3 1038.7,1074.7 1036.9,1076.7 1031.8,1081.0 1030.6,1082.3 1030.9,1083.0 1032.4,1083.0 1038.1,1081.9 1039.9,1081.2 1040.9,1080.4 1041.6,1079.2 1042.2,1078.8 1042.7,1079.1 1043.2,1080.0 1044.3,1082.9 1044.8,1083.6 1045.3,1083.7 1045.9,1083.4 1046.4,1082.5 1046.8,1080.6 1048.0,1071.0 1048.6,1068.5 1048.9,1068.5 1049.6,1070.8 1051.5,1079.6 1052.1,1081.2 1052.6,1081.6 1053.2,1081.3 1053.5,1080.3 1053.7,1078.1 1053.6,1067.1 1053.7,1064.8 1053.9,1063.8 1054.4,1063.3 1055.0,1063.3 1057.1,1064.7 1061.3,1068.8 1063.4,1071.4 1063.8,1071.7 1064.0,1071.6 1064.1,1071.1 1064.1,1070.3 1063.8,1068.8 1060.9,1058.9 1059.1,1051.4 1059.0,1049.0 1059.3,1048.4 1059.8,1048.5 1060.7,1049.4 1069.0,1061.3 1069.5,1061.7 1069.9,1061.7 1070.2,1061.2 1069.9,1058.9 1068.2,1053.5 1066.3,1048.5 1063.9,1042.9 1062.8,1039.7 1063.0,1039.0 1063.6,1038.7 1064.3,1038.7 1065.5,1039.2 1070.5,1042.8 1074.6,1046.0 1075.2,1046.2 1075.4,1046.1 1075.6,1045.6 1075.5,1044.9 1075.0,1043.6 1073.0,1039.3 1070.6,1035.2 1066.2,1029.3 1066.0,1028.3 1066.5,1027.9 1067.9,1027.9 1069.1,1028.2 1070.5,1028.8 1074.3,1031.3 1075.8,1032.7 1077.3,1034.5 1080.2,1039.3 1081.2,1041.4 1082.0,1044.0 1082.5,1046.4 1083.0,1050.0 1083.2,1052.5 1083.0,1055.5 1081.9,1062.1 1081.1,1064.7 1080.0,1067.4 1078.8,1069.6 1075.5,1074.3 1072.8,1077.2 1070.1,1079.3 1069.6,1080.0 1069.5,1080.4 1070.0,1080.9 1071.2,1081.1 1073.3,1080.4 1074.3,1079.8 1076.5,1077.4 1079.1,1073.9 1079.9,1073.2 1080.3,1073.0 1080.6,1073.3 1080.6,1073.9 1078.2,1079.8 1077.2,1081.8 1074.3,1085.9 1068.5,1092.2 1062.7,1097.4 1061.8,1098.5 1061.6,1099.0 1062.3,1099.4 1064.0,1099.3 1066.8,1098.7 1070.5,1097.3 1071.4,1097.2 1072.2,1097.5 1072.7,1098.3 1073.9,1102.1 1075.1,1104.6 1075.4,1104.6 1075.8,1104.1 1082.1,1089.6 1083.3,1087.7 1084.1,1086.8 1085.1,1086.5 1085.7,1086.5 1086.2,1086.7 1086.9,1088.2 1087.0,1089.2 1087.0,1092.8 1086.7,1098.0 1086.4,1099.5 1086.2,1100.4 1085.5,1101.4 1085.6,1101.7 1086.5,1102.1 1087.0,1102.0 1087.6,1101.4 1088.9,1099.2 1089.4,1097.5 1090.0,1094.6 1092.1,1070.7 1092.3,1068.6 1092.5,1067.3 1092.8,1067.1 1093.4,1068.7 1093.8,1070.5 1095.8,1081.8 1097.4,1087.9 1098.0,1089.0 1098.7,1089.6 1099.7,1090.0 1100.3,1090.0 1100.8,1089.7 1101.8,1088.3 1102.0,1087.3 1102.1,1084.0 1101.7,1078.9 1100.3,1074.3 1098.3,1069.0 1097.9,1067.2 1097.8,1066.0 1098.0,1064.7 1098.3,1064.1 1099.1,1063.7 1100.1,1063.8 1104.9,1065.0 1106.4,1065.2 1106.8,1065.0 1107.0,1064.6 1107.0,1064.0 1105.9,1061.9 1104.8,1060.4 1095.6,1048.8 1095.0,1047.6 1094.8,1046.8 1095.2,1046.0 1095.7,1045.6 1096.7,1045.6 1106.3,1048.9 1106.9,1048.9 1107.1,1048.7 1107.3,1048.2 1107.1,1047.5 1105.2,1044.5 1101.4,1039.5 1097.5,1035.4 1091.6,1030.0 1090.7,1028.6 1090.8,1028.3 1091.4,1028.2 1094.4,1028.6 1098.1,1030.0 1103.4,1033.0 1108.1,1036.5 1113.1,1041.3 1115.0,1043.5 1116.7,1046.2 1117.9,1048.8 1119.4,1052.7 1120.2,1055.5 1120.9,1058.6 1121.2,1061.3 1121.3,1068.0 1121.0,1071.0 1119.5,1077.7 1118.6,1080.2 1117.5,1082.6 1116.3,1084.5 1113.3,1088.1 1112.4,1089.6 1112.5,1090.0 1113.3,1089.9 1117.1,1088.1 1121.0,1087.1 1121.7,1087.2 1121.9,1087.6 1121.7,1088.4 1119.8,1090.8 1108.4,1101.4 1107.4,1102.8 1107.5,1103.1 1108.0,1103.5 1108.6,1103.6 1110.9,1103.1 1116.4,1101.1 1122.2,1098.4 1123.8,1097.9 1124.0,1098.3 1122.9,1100.2 1121.8,1101.8 1118.0,1106.8 1115.9,1109.1 1107.4,1117.1 1106.6,1118.0 1107.5,1118.3 1108.4,1118.4 1111.4,1118.2 1112.6,1117.9 1115.6,1116.1 1116.0,1116.3 1116.2,1117.1 1116.0,1120.5 1116.5,1121.5 1116.8,1121.6 1117.7,1120.8 1122.5,1114.0 1123.4,1113.0 1124.0,1112.8 1124.3,1113.2 1124.9,1116.3 1125.7,1117.0 1126.1,1116.9 1126.6,1116.2 1127.9,1113.3 1131.1,1104.6 1131.7,1103.6 1132.3,1103.1 1133.1,1103.0 1133.8,1103.5 1134.6,1105.1 1135.4,1107.4 1137.5,1113.9 1138.2,1115.3 1138.5,1115.6 1138.9,1114.9 1138.9,1114.0 1138.5,1109.9 1136.7,1100.2 1134.3,1090.8 1130.6,1078.9 1130.3,1077.2 1130.4,1076.4 1130.9,1076.1 1131.3,1076.3 1132.1,1077.0 1135.0,1081.4 1136.5,1083.0 1137.8,1083.7 1138.2,1083.5 1138.9,1082.0 1138.9,1081.0 1138.8,1079.3 1137.6,1072.3 1137.6,1070.9 1137.8,1070.2 1138.5,1069.9 1139.1,1070.1 1140.0,1071.0 1146.2,1080.3 1146.6,1080.4 1146.9,1080.2 1147.2,1079.6 1147.2,1078.7 1146.1,1075.3 1142.7,1067.0 1138.8,1058.4 1133.1,1047.5 1132.5,1046.0 1132.5,1045.2 1133.0,1044.9 1133.6,1045.0 1135.8,1046.3 1137.9,1048.0 1141.0,1050.7 1145.5,1055.7 1146.4,1056.5 1146.9,1056.7 1147.2,1056.3 1147.1,1055.6 1146.7,1054.1 1143.4,1046.2 1142.1,1043.9 1139.1,1040.1 1138.5,1039.0 1138.7,1038.2 1139.6,1038.0 1141.9,1038.1 1143.7,1038.5 1145.8,1039.3 1151.2,1042.4 1153.3,1044.0 1155.4,1046.2 1157.0,1048.5 1160.0,1054.5 1160.9,1057.2 1161.4,1059.6 1161.7,1062.8 1161.8,1065.1 1161.5,1067.7 1161.0,1070.0 1159.2,1075.5 1156.8,1080.4 1152.9,1086.9 1152.1,1087.9 1158.6,1083.1 1160.2,1082.3 1160.4,1082.7 1159.4,1085.1 1150.4,1102.3 1149.2,1105.6 1149.3,1106.3 1149.9,1106.6 1150.5,1106.6 1151.3,1106.2 1153.4,1104.2 1158.2,1098.7 1159.9,1097.2 1160.2,1097.3 1160.3,1098.7 1158.8,1104.8 1158.0,1106.9 1156.8,1109.3 1155.4,1111.6 1149.6,1119.8 1143.8,1127.5 1142.3,1129.7 1142.3,1130.0 1142.6,1130.2 1143.2,1130.2 1146.9,1129.8 1149.3,1128.8 1151.0,1127.8 1151.9,1127.6 1152.8,1127.9 1153.3,1128.9 1154.1,1131.8 1154.5,1132.5 1154.8,1132.6 1155.3,1132.3 1155.8,1131.4 1156.7,1129.6 1162.1,1116.3 1163.7,1113.2 1164.5,1112.3 1164.9,1112.5 1165.1,1114.0 1164.9,1117.8 1164.2,1121.7 1162.2,1128.4 1162.0,1129.8 1162.1,1130.7 1162.6,1131.5 1163.0,1131.9 1163.6,1131.9 1165.2,1130.7 1166.1,1129.7 1166.6,1126.3 1168.4,1118.4 1169.0,1113.3 1169.3,1103.9 1169.0,1093.2 1169.2,1090.7 1169.9,1091.3 1172.3,1096.2 1173.3,1097.6 1174.1,1097.9 1174.4,1097.7 1174.7,1096.1 1174.5,1093.2 1173.1,1085.7 1173.1,1083.2 1173.4,1082.5 1173.8,1082.5 1174.4,1083.3 1175.1,1084.7 1180.0,1096.0 1180.6,1096.7 1181.0,1096.8 1181.5,1096.5 1181.7,1095.7 1181.7,1094.0 1180.5,1085.1 1176.4,1068.3 1175.8,1064.8 1176.2,1064.4 1176.7,1064.4 1177.7,1064.7 1180.9,1066.2 1183.1,1067.0 1183.6,1067.0 1183.9,1066.6 1183.8,1065.9 1182.0,1062.5 1178.5,1056.7 1175.2,1052.7 1173.0,1050.5 1172.1,1049.3 1172.1,1048.5 1173.0,1048.2 1175.2,1048.4 1176.8,1048.7 1178.7,1049.5 1182.8,1052.2 1184.4,1053.7 1186.2,1055.7 1189.8,1061.3 1191.0,1063.9 1191.9,1067.1 1192.4,1070.1 1192.8,1074.6 1192.8,1077.7 1192.5,1081.1 1192.0,1084.1 1190.1,1091.0 1187.9,1096.2 1183.2,1105.0 1182.1,1107.1 1181.3,1109.2 1181.4,1109.7 1181.7,1110.1 1182.3,1110.0 1184.6,1108.9 1186.8,1107.5 1188.0,1107.0 1188.8,1107.0 1189.1,1107.5 1188.6,1110.1 1186.8,1113.5 1185.1,1116.2 1182.3,1120.2 1177.8,1125.8 1177.1,1126.9 1177.0,1127.6 1177.3,1128.1 1177.9,1128.1 1179.0,1127.7 1184.1,1124.6 1185.2,1124.1 1185.8,1124.1 1186.1,1124.4 1186.1,1126.1 1185.1,1129.9 1184.3,1131.5 1183.1,1133.3 1181.7,1134.8 1173.3,1141.7 1172.6,1142.5 1172.3,1143.1 1172.6,1143.6 1173.4,1144.1 1174.3,1144.3 1177.0,1143.9 1181.0,1142.7 1183.4,1141.3 1184.6,1140.3 1185.4,1140.1 1186.0,1140.5 1186.3,1141.4 1187.3,1145.8 1188.2,1146.9 1188.6,1146.9 1189.2,1146.5 1190.9,1144.2 1192.3,1140.8 1193.9,1132.9 1195.0,1124.9 1195.3,1123.4 1195.8,1122.5 1196.3,1122.6 1197.7,1124.5 1199.6,1128.3 1200.0,1128.4 1200.9,1127.0 1201.0,1125.8 1201.0,1123.8 1199.7,1114.6 1199.5,1112.0 1200.0,1107.6 1200.3,1106.5 1200.9,1106.2 1201.7,1106.8 1203.6,1109.7 1205.6,1113.9 1205.9,1113.9 1206.0,1113.3 1206.2,1112.0 1206.0,1108.6 1204.3,1097.9 1204.2,1094.7 1204.4,1094.0 1205.0,1094.2 1205.7,1095.0 1208.0,1098.4 1209.6,1100.2 1210.4,1100.8 1210.8,1100.8 1211.0,1100.2 1209.7,1094.5 1203.4,1077.2 1202.6,1074.2 1202.9,1073.8 1203.5,1074.0 1209.3,1078.4 1210.0,1078.6 1210.3,1078.2 1210.3,1077.2 1209.7,1075.1 1207.6,1070.2 1201.4,1058.2 1200.2,1055.0 1200.5,1054.8 1201.2,1055.0 1207.4,1058.6 1210.4,1060.0 1211.0,1060.0 1211.2,1059.3 1211.0,1058.5 1209.7,1055.5 1206.9,1050.8 1203.6,1046.6 1201.0,1043.9 1199.9,1042.6 1199.9,1042.0 1201.0,1042.3 1203.6,1043.7 1205.4,1045.1 1207.3,1047.1 1209.1,1049.4 1211.5,1053.2 1213.1,1056.4 1214.7,1060.6 1216.0,1065.0 1217.8,1071.9 1218.7,1076.8 1219.4,1082.2 1219.7,1087.1 1219.5,1098.7 1219.2,1103.6 1218.7,1107.7 1217.2,1116.8 1216.4,1120.3 1213.8,1128.6 1213.4,1130.3 1213.4,1131.3 1214.1,1132.6 1214.7,1132.8 1216.3,1132.4 1217.1,1131.8 1217.9,1130.8 1222.2,1121.9 1222.7,1121.6 1223.1,1122.3 1223.4,1123.8 1224.0,1128.7 1224.8,1131.1 1225.5,1131.8 1226.1,1131.9 1226.7,1131.7 1227.2,1131.0 1228.1,1129.6 1228.6,1128.1 1229.0,1125.7 1229.4,1118.0 1229.3,1111.3 1228.3,1102.6 1228.3,1101.1 1228.5,1100.5 1229.0,1100.5 1229.6,1100.8 1230.5,1101.4 1234.4,1105.2 1236.5,1106.8 1238.4,1107.7 1238.9,1107.7 1239.2,1107.5 1239.4,1106.8 1239.1,1105.7 1238.4,1103.5 1235.2,1095.9 1232.9,1089.4 1231.5,1083.3 1231.1,1081.2 1230.9,1078.0 1231.1,1076.6 1231.5,1076.0 1232.3,1075.9 1233.4,1076.2 1236.4,1077.8 1237.5,1078.0 1238.3,1078.0 1239.2,1077.7 1239.5,1077.1 1239.5,1076.0 1238.3,1072.2 1237.4,1070.2 1236.0,1067.5 1230.1,1057.7 1229.3,1056.0 1229.3,1055.4 1230.7,1055.8 1236.2,1058.8 1237.1,1059.0 1237.5,1058.9 1237.7,1058.2 1237.0,1055.8 1233.5,1048.8 1232.0,1046.7 1227.8,1041.6 1227.8,1041.1 1228.6,1041.2 1230.7,1042.1 1232.3,1043.2 1234.3,1045.2 1239.5,1051.7 1241.4,1054.9 1243.3,1058.7 1244.8,1062.4 1246.5,1067.9 1247.5,1071.7 1248.2,1076.0 1248.6,1079.7 1248.8,1084.9 1248.6,1088.7 1248.1,1093.2 1247.2,1097.4 1245.7,1103.6 1244.4,1107.8 1242.7,1112.3 1240.9,1116.1 1236.7,1124.3 1235.8,1126.6 1235.5,1127.8 1235.9,1128.5 1236.4,1128.6 1237.5,1128.2 1242.7,1124.8 1243.7,1124.3 1244.2,1124.5 1244.3,1125.2 1243.8,1128.1 1242.0,1134.6 1240.8,1137.3 1239.1,1140.0 1237.2,1142.2 1229.3,1149.5 1229.1,1149.9 1229.4,1150.2 1231.4,1150.6 1234.0,1150.3 1239.4,1148.5 1240.7,1148.1 1242.1,1148.0 1242.7,1147.1 1243.3,1144.8 1245.7,1132.5 1246.6,1129.4 1246.9,1129.6 1247.2,1130.6 1248.3,1145.0 1248.5,1147.5 1248.8,1148.8 1249.1,1149.5 1249.4,1149.1 1249.9,1147.5 1251.9,1137.6 1252.4,1136.1 1252.8,1135.9 1253.8,1138.1 1256.1,1146.0 1257.5,1149.9 1258.0,1150.8 1258.7,1151.3 1259.1,1151.3 1259.4,1150.8 1259.6,1149.8 1259.8,1147.9 1259.9,1142.3 1259.5,1127.3 1259.1,1121.5 1260.7,1124.1 1265.8,1134.2 1269.3,1140.6 1270.2,1141.8 1270.8,1142.1 1271.1,1141.8 1271.1,1140.7 1270.2,1136.0 1264.8,1115.7 1263.9,1110.0 1264.0,1106.3 1264.2,1105.5 1264.6,1105.3 1265.3,1105.6 1266.6,1107.1 1271.0,1114.1 1271.4,1114.4 1271.7,1114.4 1272.3,1113.4 1272.1,1109.7 1269.7,1095.6 1269.8,1094.6 1270.1,1094.2 1270.6,1094.5 1271.4,1095.4 1275.4,1101.9 1278.3,1107.6 1283.4,1118.5 1283.6,1118.8 1283.9,1118.8 1284.5,1117.8 1284.5,1116.8 1284.0,1114.9 1282.0,1108.4 1279.9,1100.7 1276.8,1085.5 1276.4,1081.3 1276.7,1081.0 1277.2,1081.0 1278.0,1081.2 1286.8,1086.1 1287.5,1086.3 1287.8,1086.1 1288.0,1085.6 1287.7,1084.5 1285.1,1079.0 1280.2,1069.6 1277.5,1065.3 1270.6,1056.1 1268.8,1053.3 1268.4,1051.5 1269.5,1051.2 1272.6,1052.0 1274.9,1053.0 1277.4,1054.6 1279.8,1056.4 1283.3,1059.5 1285.4,1062.3 1287.5,1066.2 1289.0,1070.5 1290.7,1077.4 1291.6,1082.0 1292.1,1086.8 1292.2,1090.7 1291.5,1099.6 1290.0,1107.3 1287.7,1115.9 1286.3,1122.3 1285.3,1128.5 1285.3,1130.5 1285.6,1131.8 1286.8,1133.9 1287.4,1134.3 1288.0,1134.4 1288.9,1134.0 1289.5,1133.4 1290.4,1132.0 1293.1,1125.5 1293.7,1124.4 1294.1,1124.1 1294.4,1124.4 1294.6,1125.4 1294.1,1135.0 1293.2,1141.8 1291.5,1149.0 1289.6,1154.6 1285.1,1163.5 1284.8,1164.5 1285.0,1166.0 1285.4,1166.5 1287.2,1166.9 1287.9,1166.8 1288.8,1166.1 1290.4,1163.2 1294.2,1154.8 1295.0,1153.3 1295.8,1152.6 1296.5,1152.7 1297.7,1154.9 1300.1,1162.5 1300.6,1163.5 1301.1,1163.7 1301.6,1163.4 1301.9,1162.1 1302.0,1159.4 1300.7,1130.0 1300.7,1127.1 1300.9,1125.1 1301.3,1124.7 1302.0,1125.4 1302.7,1126.5 1307.7,1139.3 1308.3,1140.3 1309.2,1141.4 1309.6,1141.4 1309.9,1141.1 1310.3,1140.3 1310.4,1139.3 1310.1,1135.4 1309.5,1131.6 1306.5,1115.4 1306.3,1113.3 1306.5,1112.2 1307.0,1111.4 1307.5,1111.4 1308.2,1112.0 1308.9,1113.1 1310.9,1117.3 1312.9,1122.8 1317.7,1137.1 1318.1,1137.4 1318.5,1137.0 1319.1,1135.9 1319.3,1134.5 1319.3,1129.3 1318.8,1121.8 1318.9,1119.4 1319.7,1120.7 1320.5,1122.7 1324.9,1136.3 1325.3,1137.8 1325.4,1139.9 1325.4,1143.8 1324.1,1173.1 1324.2,1174.7 1324.4,1175.6 1324.9,1175.5 1325.9,1174.4 1328.1,1170.3 1329.3,1167.6 1330.8,1163.3 1332.1,1157.6 1332.6,1156.1 1333.2,1155.7 1333.7,1156.4 1336.0,1162.8 1339.4,1171.2 1341.0,1174.0 1341.7,1174.7 1342.2,1174.9 1342.6,1174.6 1343.3,1172.4 1343.6,1168.5 1343.4,1161.3 1343.0,1158.1 1341.7,1151.4 1339.5,1143.8 1338.1,1137.8 1337.4,1134.0 1337.1,1131.9 1337.1,1130.4 1337.4,1129.9 1338.1,1129.9 1338.8,1130.1 1339.6,1130.7 1343.0,1133.8 1343.9,1134.2 1344.6,1134.3 1345.3,1133.9 1345.7,1133.5 1345.8,1132.9 1345.4,1131.1 1344.7,1129.8 1336.7,1118.4 1333.7,1112.9 1332.2,1109.5 1330.3,1104.7 1328.9,1099.5 1328.6,1097.8 1328.6,1096.4 1328.9,1095.8 1329.7,1095.4 1330.5,1095.5 1331.6,1096.3 1333.0,1097.5 1338.1,1102.5 1340.5,1104.6 1341.3,1105.1 1341.9,1105.2 1342.4,1105.0 1342.7,1104.2 1342.8,1103.3 1342.1,1100.1 1341.2,1097.1 1340.2,1094.8 1338.6,1092.2 1336.8,1089.6 1331.8,1083.5 1324.7,1075.7 1324.1,1074.7 1324.1,1074.1 1324.9,1073.7 1325.7,1073.7 1327.0,1074.0 1332.9,1076.3 1334.5,1076.6 1335.8,1076.5 1337.3,1076.1 1338.0,1075.7 1338.3,1074.8 1338.1,1073.7 1337.4,1071.8 1336.4,1070.2 1334.8,1068.2 1319.8,1052.8 1319.0,1051.6 1318.9,1050.9 1319.3,1050.1 1319.9,1049.7 1321.1,1049.6 1322.6,1049.7 1325.2,1050.1 1327.2,1050.7 1329.6,1052.1 1331.8,1053.8 1335.2,1056.8 1337.5,1059.3 1339.9,1062.5 1341.8,1065.9 1344.5,1071.2 1346.1,1075.2 1347.8,1080.0 1349.0,1084.8 1351.5,1097.2 1353.2,1109.3 1354.1,1118.0 1355.3,1130.7 1356.8,1149.4 1357.3,1152.6 1357.8,1153.9 1358.6,1153.9 1359.1,1153.6 1359.9,1152.9 1361.8,1150.0 1362.5,1148.4 1363.8,1144.2 1364.6,1140.8 1365.1,1139.5 1365.7,1139.5 1366.2,1140.8 1367.0,1144.2 1368.1,1147.6 1368.6,1148.3 1369.4,1148.7 1369.8,1148.1 1370.1,1146.2 1370.2,1143.3 1369.8,1113.3 1369.9,1108.6 1370.2,1105.6 1370.6,1105.1 1373.1,1108.8 1375.0,1111.4 1375.7,1112.0 1376.3,1112.2 1376.6,1111.8 1377.0,1110.7 1377.0,1107.7 1375.8,1102.3 1375.1,1099.7 1373.0,1093.6 1370.1,1086.6 1369.4,1084.6 1369.2,1083.7 1369.4,1083.4 1370.5,1084.2 1379.0,1095.0 1379.7,1095.5 1380.0,1095.4 1380.2,1094.6 1379.7,1091.8 1377.7,1085.9 1375.0,1079.2 1369.3,1066.7 1368.4,1064.4 1368.2,1063.3 1368.6,1062.9 1369.0,1063.1 1369.8,1063.8 1373.4,1068.9 1375.0,1070.8 1379.3,1075.3 1382.0,1077.4 1382.6,1077.5 1383.0,1077.0 1383.0,1076.1 1381.8,1072.4 1379.1,1066.4 1377.6,1063.8 1365.9,1047.4 1363.5,1043.4 1363.2,1042.4 1363.4,1041.7 1363.9,1041.3 1364.9,1041.0 1370.1,1040.7 1371.2,1040.4 1371.8,1040.0 1372.2,1039.3 1371.9,1038.6 1370.9,1037.5 1369.3,1036.4 1364.7,1033.4 1363.7,1032.3 1363.4,1031.6 1363.8,1030.9 1364.9,1030.5 1367.2,1030.4 1370.4,1030.4 1407.2,1033.2 1412.7,1033.2 1413.1,1032.8 1413.3,1031.5 1413.5,1028.6 1413.5,1009.5 1085.4,1009.4 937.5,1009.7 912.6,1009.9 911.4,1010.5 909.9,1011.4 908.7,1013.4 908.8,1013.2 909.2,1013.5 910.1,1014.2 917.0,1020.5 924.4,1026.7ZM1447.8,1099.7 1444.8,1102.3 1441.9,1105.1 1439.2,1108.2 1436.6,1111.5 1434.2,1115.1 1431.9,1119.0 1429.9,1123.1 1428.9,1125.6 1427.4,1131.0 1426.9,1133.8 1426.2,1139.8 1426.1,1142.8 1426.3,1149.1 1427.1,1155.4 1427.6,1158.6 1427.3,1160.8 1411.6,1174.2 1403.6,1171.8 1397.8,1170.5 1392.0,1169.8 1388.0,1169.6 1381.9,1170.0 1376.0,1171.0 1370.3,1172.5 1364.8,1174.6 1359.5,1177.2 1354.6,1180.3 1349.9,1183.9 1345.6,1187.9 1341.7,1192.4 1338.2,1197.2 1335.2,1202.5 1332.7,1208.1 1344.9,1208.9 1346.8,1204.9 1349.0,1201.1 1351.6,1197.6 1354.6,1194.4 1357.8,1191.5 1361.4,1189.0 1365.1,1186.8 1369.1,1184.9 1373.3,1183.4 1377.5,1182.3 1381.9,1181.6 1386.4,1181.3 1392.4,1181.6 1396.4,1182.2 1400.5,1183.2 1404.8,1184.5 1412.0,1187.2 1418.1,1186.2 1435.9,1168.6 1440.3,1163.4 1438.0,1149.1 1438.3,1143.3 1439.1,1137.8 1440.2,1132.8 1441.8,1128.1 1443.6,1123.9 1445.8,1120.0 1448.3,1116.5 1451.1,1113.3 1454.1,1110.4 1457.4,1107.8 1460.8,1105.6 1464.4,1103.6 1464.0,1090.3 1457.4,1093.4 1454.1,1095.2 1450.9,1097.3 1447.8,1099.7Z" fill="#cccccc" fill-rule="evenodd"/>
<path d="M901.1,563.1 904.2,560.7 907.2,558.1 910.1,555.3 912.8,552.2 915.4,548.9 917.8,545.3 920.1,541.4 922.1,537.3 923.1,534.8 924.6,529.4 925.1,526.6 925.8,520.6 925.9,517.6 925.7,511.3 924.9,505.0 924.4,501.8 924.7,499.6 940.4,486.2 948.4,488.6 954.2,489.9 960.0,490.6 964.0,490.8 970.1,490.4 976.0,489.4 981.7,487.9 987.2,485.8 992.5,483.2 997.4,480.1 1002.1,476.5 1006.4,472.5 1010.3,468.0 1013.8,463.2 1016.8,457.9 1019.3,452.3 1007.1,451.5 1005.2,455.5 1003.0,459.3 1000.4,462.8 997.4,466.0 994.2,468.9 990.6,471.4 986.9,473.6 982.9,475.5 978.7,477.0 974.5,478.1 970.1,478.8 965.6,479.1 959.6,478.8 955.6,478.2 951.5,477.2 947.2,475.9 940.0,473.2 933.9,474.2 916.1,491.8 911.7,497.0 914.0,511.3 913.7,517.1 912.9,522.6 911.8,527.6 910.2,532.3 908.4,536.5 906.2,540.4 903.7,543.9 900.9,547.1 897.9,550.0 894.6,552.6 891.2,554.8 887.6,556.8 888.0,570.1 894.6,567.0 901.1,563.1ZM982.0,693.3 1009.0,683.9 952.8,662.2 938.7,674.6 982.0,693.3ZM1014.8,687.0 938.7,715.6 948.1,730.8 1019.5,706.2 1058.6,706.9 1057.7,689.3 1014.8,687.0ZM965.4,754.3 966.8,752.8 968.4,751.5 970.1,750.4 972.0,749.6 974.1,748.9 976.2,748.5 978.5,748.3 980.9,748.5 983.2,748.9 985.4,749.6 987.4,750.5 991.2,753.0 992.9,754.5 995.9,758.0 997.3,760.0 999.6,764.3 1025.4,764.7 1055.3,742.0 1034.7,728.0 1012.5,749.0 1009.1,744.7 1004.7,740.6 1002.2,738.7 999.5,737.0 996.5,735.5 993.3,734.1 989.9,733.0 986.3,732.2 982.5,731.7 978.5,731.5 972.9,731.8 967.5,732.6 962.6,733.9 958.1,735.8 954.0,738.0 950.4,740.7 947.3,743.7 944.7,747.1 942.6,750.7 941.1,754.6 940.2,758.8 939.9,763.1 961.7,763.1 961.9,761.2 962.4,759.3 963.2,757.5 964.2,755.8 965.4,754.3ZM940.8,780.2 941.8,782.4 943.1,784.3 944.8,785.9 945.8,786.5 1057.7,785.3 1055.8,770.6 939.9,767.1 939.9,775.1 940.2,777.8 940.8,780.2ZM964.2,821.9 965.4,820.3 966.8,818.8 968.4,817.6 970.1,816.5 972.0,815.6 974.1,814.9 976.2,814.5 978.5,814.4 980.9,814.5 983.2,814.9 985.4,815.6 987.4,816.5 991.2,819.0 992.9,820.5 995.9,824.0 997.3,826.0 999.6,830.3 1025.4,830.8 1055.3,808.0 1034.7,794.0 1012.5,815.1 1009.1,810.8 1004.7,806.7 1002.2,804.8 999.5,803.0 996.5,801.5 993.3,800.1 989.9,799.0 986.3,798.2 982.5,797.7 978.5,797.5 972.9,797.8 967.5,798.6 962.6,800.0 958.1,801.8 954.0,804.1 950.4,806.7 947.3,809.8 944.7,813.1 942.6,816.8 941.1,820.7 940.2,824.8 939.9,829.1 961.7,829.1 961.9,827.2 962.4,825.3 963.2,823.6 964.2,821.9ZM940.5,845.1 941.2,847.4 942.4,849.5 943.9,851.2 945.8,852.5 1057.7,851.4 1055.8,836.6 939.9,833.8 939.9,841.1 940.5,845.1ZM941.5,884.1 965.0,883.0 964.5,860.7 940.6,861.9 941.5,884.1ZM1012.5,882.5 1010.1,869.6 987.9,870.8 989.1,883.2 1012.5,882.5ZM1058.6,901.7 1055.8,884.1 941.5,890.0 942.2,902.9 1058.6,901.7ZM1003.1,929.8 1058.1,927.5 1057.0,909.9 959.8,913.4 1003.1,929.8ZM1034.7,959.5 1034.7,952.0 1030.0,944.5 946.9,914.6 938.7,931.0 999.6,955.5 940.6,974.3 945.8,990.7 1030.0,966.1 1034.7,959.5ZM1057.0,994.2 1055.8,976.6 1004.3,977.8 948.1,997.7 1057.0,994.2ZM906.2,1120.0 908.4,1123.9 910.2,1128.1 911.8,1132.8 912.9,1137.8 913.7,1143.3 914.0,1149.1 911.7,1163.4 916.1,1168.6 933.9,1186.2 940.0,1187.2 947.2,1184.5 951.5,1183.2 955.6,1182.2 959.6,1181.6 965.6,1181.3 970.1,1181.6 974.5,1182.3 978.7,1183.4 982.9,1184.9 986.9,1186.8 990.6,1189.0 994.2,1191.5 997.4,1194.4 1000.4,1197.6 1003.0,1201.1 1005.2,1204.9 1007.1,1208.9 1019.3,1208.1 1016.8,1202.5 1013.8,1197.2 1010.3,1192.4 1006.4,1187.9 1002.1,1183.9 997.4,1180.3 992.5,1177.2 987.2,1174.6 981.7,1172.5 976.0,1171.0 970.1,1170.0 964.0,1169.6 960.0,1169.8 954.2,1170.5 948.4,1171.8 940.4,1174.2 924.7,1160.8 924.4,1158.6 925.4,1152.2 925.9,1145.9 925.8,1139.8 925.5,1136.8 924.6,1131.0 923.9,1128.3 922.1,1123.1 920.1,1119.0 917.8,1115.1 915.4,1111.5 912.8,1108.2 910.1,1105.1 907.2,1102.3 904.2,1099.7 901.1,1097.3 897.9,1095.2 894.6,1093.4 888.0,1090.3 887.6,1103.6 891.2,1105.6 894.6,1107.8 897.9,1110.4 900.9,1113.3 903.7,1116.5 906.2,1120.0ZM908.7,646.6 909.9,648.6 911.4,649.5 912.6,650.1 937.5,650.3 1085.4,650.6 1413.5,650.5 1413.5,631.4 1413.3,628.5 1413.1,627.2 1412.7,626.8 1407.2,626.8 1370.4,629.6 1367.2,629.6 1364.9,629.5 1363.8,629.1 1363.4,628.4 1363.7,627.7 1364.7,626.6 1369.3,623.6 1370.9,622.5 1371.9,621.4 1372.2,620.7 1371.8,620.0 1371.2,619.6 1370.1,619.3 1364.9,619.0 1363.9,618.7 1363.4,618.3 1363.2,617.6 1363.5,616.6 1365.9,612.6 1377.6,596.2 1380.3,591.2 1381.8,587.6 1383.0,583.9 1383.0,583.0 1382.6,582.5 1382.0,582.6 1379.3,584.7 1375.0,589.2 1373.4,591.1 1369.8,596.2 1369.0,596.9 1368.6,597.1 1368.2,596.7 1368.4,595.6 1369.3,593.3 1375.0,580.8 1377.7,574.1 1379.7,568.2 1380.2,565.4 1380.0,564.6 1379.7,564.5 1379.0,565.0 1370.5,575.8 1369.4,576.6 1369.2,576.3 1369.4,575.4 1370.1,573.4 1373.0,566.4 1375.1,560.3 1375.8,557.7 1377.0,552.3 1377.0,549.3 1376.6,548.2 1376.3,547.8 1375.7,548.0 1375.0,548.6 1373.1,551.2 1370.6,554.9 1370.2,554.4 1369.9,551.4 1369.8,546.7 1370.2,516.7 1370.1,513.8 1369.8,511.9 1369.4,511.3 1368.6,511.7 1368.1,512.4 1367.0,515.8 1366.2,519.2 1365.7,520.5 1365.1,520.5 1364.6,519.2 1363.8,515.8 1362.5,511.6 1361.8,510.0 1359.9,507.1 1359.1,506.4 1358.6,506.1 1357.8,506.1 1357.3,507.4 1356.8,510.6 1355.3,529.3 1354.1,542.0 1353.2,550.7 1351.5,562.8 1349.0,575.2 1347.8,580.0 1346.1,584.8 1344.5,588.8 1341.8,594.1 1339.9,597.5 1337.5,600.7 1335.2,603.2 1331.8,606.2 1329.6,607.9 1327.2,609.3 1325.2,609.9 1322.6,610.3 1321.1,610.4 1319.9,610.3 1319.3,609.9 1318.9,609.1 1319.0,608.4 1319.8,607.2 1334.8,591.8 1336.4,589.8 1337.4,588.2 1338.1,586.3 1338.3,585.2 1338.0,584.3 1337.3,583.9 1335.8,583.5 1334.5,583.4 1332.9,583.7 1327.0,586.0 1325.7,586.3 1324.9,586.3 1324.1,585.9 1324.1,585.3 1324.7,584.3 1331.8,576.5 1336.8,570.4 1338.6,567.8 1340.2,565.2 1341.2,562.9 1342.1,559.9 1342.8,556.7 1342.7,555.8 1342.4,555.0 1341.9,554.8 1341.3,554.9 1340.5,555.4 1338.1,557.5 1333.0,562.5 1331.6,563.7 1330.5,564.5 1329.7,564.6 1328.9,564.2 1328.6,563.6 1328.6,562.2 1328.9,560.5 1330.3,555.3 1332.2,550.5 1333.7,547.1 1336.7,541.6 1344.7,530.2 1345.4,528.9 1345.8,527.1 1345.7,526.5 1345.3,526.1 1344.6,525.7 1343.9,525.8 1343.0,526.2 1339.6,529.3 1338.8,529.9 1338.1,530.1 1337.4,530.1 1337.1,529.6 1337.1,528.1 1337.4,526.0 1338.1,522.2 1339.5,516.2 1341.7,508.6 1343.0,501.9 1343.4,498.7 1343.6,491.5 1343.3,487.6 1342.6,485.4 1342.2,485.1 1341.7,485.3 1341.0,486.0 1339.4,488.8 1336.0,497.2 1333.7,503.6 1333.2,504.3 1332.6,503.9 1332.1,502.4 1330.8,496.7 1329.3,492.4 1328.1,489.7 1325.9,485.6 1324.9,484.5 1324.4,484.4 1324.2,485.3 1324.1,486.9 1325.4,516.2 1325.3,522.2 1324.9,523.7 1320.5,537.3 1319.3,540.2 1318.9,540.6 1318.8,538.2 1319.3,530.7 1319.3,525.5 1319.1,524.1 1318.5,523.0 1318.1,522.6 1317.7,522.9 1312.9,537.2 1310.9,542.7 1308.9,546.9 1308.2,548.0 1307.5,548.6 1307.0,548.6 1306.5,547.8 1306.3,546.7 1306.5,544.6 1309.5,528.4 1310.1,524.6 1310.4,520.7 1310.3,519.7 1309.9,518.9 1309.6,518.6 1309.2,518.6 1308.3,519.7 1307.7,520.7 1302.7,533.5 1302.0,534.6 1301.3,535.3 1300.9,534.9 1300.7,532.9 1300.7,530.0 1302.0,500.6 1301.9,497.9 1301.6,496.6 1301.1,496.3 1300.6,496.5 1300.1,497.5 1297.7,505.1 1296.5,507.3 1295.8,507.4 1295.0,506.7 1294.2,505.2 1290.4,496.8 1288.8,493.9 1287.9,493.2 1287.2,493.1 1285.4,493.5 1285.0,494.0 1284.8,495.5 1285.1,496.5 1289.6,505.4 1291.5,511.0 1293.2,518.2 1294.1,525.0 1294.6,532.6 1294.4,535.6 1294.1,535.9 1293.7,535.6 1293.1,534.5 1290.4,528.0 1289.5,526.6 1288.9,526.0 1288.0,525.6 1287.4,525.7 1286.8,526.1 1285.6,528.2 1285.3,529.5 1285.3,531.5 1286.3,537.7 1287.7,544.1 1290.0,552.7 1291.5,560.4 1292.2,569.3 1292.1,573.2 1291.6,578.0 1290.7,582.6 1289.0,589.5 1287.5,593.8 1285.4,597.7 1283.3,600.5 1279.8,603.6 1277.4,605.4 1274.9,607.0 1272.6,608.0 1269.5,608.8 1268.4,608.5 1268.8,606.7 1270.6,603.9 1277.5,594.7 1280.2,590.4 1285.1,581.0 1286.6,577.9 1288.0,574.4 1287.8,573.9 1287.5,573.7 1286.8,573.9 1278.0,578.8 1277.2,579.0 1276.7,579.0 1276.4,578.7 1276.8,574.5 1279.9,559.3 1282.0,551.6 1284.0,545.1 1284.5,543.2 1284.5,542.2 1283.9,541.2 1283.6,541.2 1283.4,541.5 1278.3,552.4 1275.4,558.1 1271.4,564.6 1270.6,565.5 1270.1,565.8 1269.8,565.4 1269.7,564.4 1272.1,550.3 1272.3,546.6 1271.7,545.6 1271.4,545.6 1271.0,545.9 1266.6,552.9 1265.3,554.4 1264.6,554.7 1264.2,554.5 1264.0,553.7 1263.9,550.0 1264.8,544.3 1270.2,524.0 1271.1,519.3 1271.1,518.2 1270.8,517.9 1270.2,518.2 1269.3,519.4 1265.8,525.8 1260.7,535.9 1259.1,538.5 1259.5,532.7 1259.9,517.7 1259.8,512.1 1259.6,510.2 1259.4,509.2 1259.1,508.7 1258.7,508.7 1258.0,509.2 1257.5,510.1 1256.1,514.0 1253.8,521.9 1252.8,524.1 1252.4,523.9 1251.9,522.4 1249.9,512.5 1249.4,510.9 1249.1,510.5 1248.8,511.2 1248.5,512.5 1248.3,515.0 1247.2,529.4 1246.9,530.4 1246.6,530.6 1245.7,527.5 1243.3,515.2 1242.7,512.9 1242.1,512.0 1240.7,511.9 1239.4,511.5 1234.0,509.7 1232.5,509.5 1230.0,509.6 1229.4,509.8 1229.1,510.1 1229.3,510.5 1237.2,517.8 1239.1,520.0 1240.8,522.7 1242.0,525.4 1244.2,533.8 1244.3,534.8 1244.2,535.5 1243.7,535.7 1242.7,535.2 1237.5,531.8 1236.4,531.4 1235.9,531.5 1235.5,532.2 1235.8,533.4 1236.7,535.7 1240.9,543.9 1242.7,547.7 1244.4,552.2 1245.7,556.4 1247.2,562.6 1248.1,566.8 1248.6,571.3 1248.8,575.1 1248.6,580.3 1248.2,584.0 1247.5,588.3 1246.5,592.1 1244.8,597.6 1243.3,601.3 1241.4,605.1 1239.5,608.3 1236.3,612.4 1234.3,614.8 1232.3,616.8 1230.7,617.9 1228.6,618.8 1227.8,618.9 1227.8,618.4 1232.0,613.3 1233.5,611.2 1236.2,606.0 1237.6,602.7 1237.7,601.8 1237.5,601.1 1237.1,601.0 1236.2,601.2 1230.7,604.2 1229.3,604.6 1229.3,604.0 1230.1,602.3 1236.0,592.5 1237.4,589.8 1238.3,587.8 1239.5,584.0 1239.5,582.9 1239.2,582.3 1238.3,582.0 1237.5,582.0 1236.4,582.2 1233.4,583.8 1232.3,584.1 1231.5,584.0 1231.1,583.4 1230.9,582.0 1231.1,578.8 1231.5,576.7 1232.9,570.6 1235.2,564.1 1238.4,556.5 1239.4,553.2 1239.2,552.5 1238.9,552.3 1238.4,552.3 1236.5,553.2 1234.4,554.8 1230.5,558.6 1229.0,559.5 1228.5,559.5 1228.3,558.9 1228.3,557.4 1229.3,548.7 1229.4,542.0 1229.0,534.3 1228.6,531.9 1228.1,530.4 1226.7,528.3 1226.1,528.1 1225.5,528.2 1224.8,528.9 1224.0,531.3 1223.4,536.2 1223.1,537.7 1222.7,538.4 1222.2,538.1 1217.9,529.2 1217.1,528.2 1216.3,527.6 1214.7,527.2 1214.1,527.4 1213.4,528.7 1213.4,529.7 1213.8,531.4 1216.4,539.7 1217.2,543.2 1218.7,552.3 1219.2,556.4 1219.5,561.3 1219.7,572.9 1219.4,577.8 1218.7,583.2 1217.8,588.1 1216.0,595.0 1214.7,599.4 1213.1,603.6 1211.5,606.8 1209.1,610.6 1207.3,612.9 1205.4,614.9 1203.6,616.3 1201.0,617.7 1199.9,618.0 1199.9,617.4 1201.0,616.1 1203.6,613.4 1206.9,609.2 1209.7,604.5 1211.0,601.5 1211.2,600.7 1211.0,600.0 1210.4,600.0 1207.4,601.4 1201.2,605.0 1200.5,605.2 1200.2,605.0 1201.4,601.8 1207.6,589.8 1209.7,584.9 1210.3,582.8 1210.3,581.8 1210.0,581.4 1209.3,581.6 1203.5,586.0 1202.9,586.2 1202.6,585.8 1203.4,582.8 1209.7,565.5 1211.0,559.8 1210.8,559.2 1210.4,559.2 1209.6,559.8 1208.0,561.6 1205.7,565.0 1205.0,565.8 1204.4,566.0 1204.2,565.3 1204.3,562.1 1206.0,551.4 1206.2,548.0 1206.0,546.7 1205.9,546.1 1205.6,546.1 1203.6,550.3 1201.7,553.2 1200.9,553.8 1200.3,553.5 1200.0,552.4 1199.5,548.0 1199.7,545.4 1201.0,536.2 1201.0,534.2 1200.9,533.0 1200.0,531.6 1199.6,531.7 1197.7,535.5 1196.3,537.4 1195.8,537.5 1195.3,536.6 1195.0,535.1 1193.9,527.1 1192.3,519.2 1191.6,517.2 1189.9,514.2 1189.2,513.5 1188.6,513.1 1188.2,513.1 1187.3,514.2 1186.3,518.6 1186.0,519.5 1185.4,519.9 1184.6,519.7 1183.4,518.7 1181.0,517.3 1177.0,516.1 1174.3,515.7 1173.4,515.9 1172.6,516.4 1172.3,516.9 1172.6,517.5 1173.3,518.3 1181.7,525.2 1183.1,526.7 1184.3,528.5 1185.1,530.1 1186.1,533.9 1186.1,535.6 1185.8,535.9 1185.2,535.9 1184.1,535.4 1179.0,532.3 1177.9,531.9 1177.3,531.9 1177.0,532.4 1177.1,533.1 1177.8,534.2 1182.3,539.8 1185.1,543.8 1187.8,548.3 1188.6,549.9 1189.1,552.5 1188.8,553.0 1188.0,553.0 1186.8,552.5 1183.3,550.4 1182.3,550.0 1181.7,549.9 1181.4,550.3 1181.3,550.8 1182.1,552.9 1183.2,555.0 1187.9,563.8 1190.1,569.0 1192.0,575.9 1192.5,578.9 1192.8,582.3 1192.8,585.4 1192.4,589.9 1191.9,592.9 1191.0,596.1 1189.8,598.7 1186.2,604.3 1184.4,606.3 1182.8,607.8 1178.7,610.5 1176.8,611.3 1175.2,611.6 1173.0,611.8 1172.1,611.5 1172.1,610.7 1173.0,609.5 1175.2,607.3 1178.5,603.3 1182.0,597.5 1183.8,594.1 1183.9,593.4 1183.6,593.0 1183.1,593.0 1180.9,593.8 1177.7,595.3 1176.7,595.6 1176.2,595.6 1175.8,595.2 1176.4,591.7 1180.5,574.9 1181.7,566.0 1181.7,564.3 1181.5,563.5 1181.0,563.2 1180.6,563.3 1180.0,564.0 1175.1,575.3 1174.4,576.7 1173.8,577.5 1173.4,577.5 1173.1,576.8 1173.1,574.3 1174.5,566.8 1174.7,563.9 1174.4,562.3 1174.1,562.1 1173.8,562.1 1173.3,562.4 1172.3,563.8 1169.9,568.7 1169.2,569.3 1169.0,566.8 1169.3,556.1 1169.0,546.7 1168.4,541.6 1166.6,533.7 1166.1,530.3 1165.2,529.3 1163.6,528.1 1163.0,528.1 1162.6,528.5 1162.1,529.3 1162.0,530.2 1162.2,531.6 1164.2,538.3 1164.9,542.2 1165.1,546.0 1164.9,547.5 1164.5,547.7 1163.7,546.8 1162.1,543.7 1156.7,530.4 1155.3,527.7 1154.8,527.4 1154.5,527.5 1154.1,528.2 1153.3,531.1 1152.8,532.1 1151.9,532.4 1151.0,532.2 1149.3,531.2 1146.9,530.2 1143.2,529.8 1142.3,530.0 1142.3,530.3 1143.8,532.5 1149.6,540.2 1155.4,548.4 1156.8,550.7 1158.0,553.1 1158.8,555.2 1160.3,561.3 1160.2,562.7 1159.9,562.8 1158.2,561.3 1153.4,555.8 1151.3,553.8 1150.5,553.4 1149.9,553.4 1149.3,553.7 1149.2,554.4 1150.4,557.7 1159.4,574.9 1160.4,577.3 1160.2,577.7 1158.6,576.9 1152.1,572.1 1152.9,573.1 1156.8,579.6 1159.2,584.5 1161.0,590.0 1161.5,592.3 1161.8,594.9 1161.7,597.2 1161.4,600.4 1160.9,602.8 1160.0,605.5 1157.0,611.5 1155.4,613.8 1153.3,616.0 1151.2,617.6 1145.8,620.7 1143.7,621.5 1141.9,621.9 1139.6,622.0 1138.7,621.8 1138.5,621.0 1139.1,619.9 1142.1,616.1 1143.4,613.8 1146.7,605.9 1147.1,604.4 1147.2,603.7 1146.9,603.3 1146.4,603.5 1145.5,604.3 1141.0,609.3 1137.9,612.0 1135.8,613.7 1133.6,615.0 1133.0,615.1 1132.5,614.8 1132.5,614.0 1133.1,612.5 1138.8,601.6 1142.7,593.0 1146.1,584.7 1147.2,581.3 1147.2,580.4 1146.9,579.8 1146.6,579.6 1146.2,579.7 1140.0,589.0 1139.1,589.9 1138.5,590.1 1137.8,589.8 1137.6,589.1 1137.6,587.7 1138.8,580.7 1138.9,579.0 1138.9,578.0 1138.2,576.5 1137.8,576.3 1137.3,576.5 1136.5,577.0 1135.0,578.6 1132.1,583.0 1131.3,583.7 1130.9,583.9 1130.4,583.6 1130.3,582.8 1130.6,581.1 1134.3,569.2 1136.7,559.8 1138.5,550.1 1138.9,546.0 1138.9,545.1 1138.5,544.4 1138.2,544.7 1137.5,546.1 1135.4,552.6 1134.6,554.9 1133.8,556.5 1133.1,557.0 1132.3,556.9 1131.7,556.4 1131.1,555.4 1127.9,546.7 1127.1,544.8 1126.1,543.1 1125.7,543.0 1124.9,543.7 1124.3,546.8 1124.0,547.2 1123.4,547.0 1122.5,546.0 1117.7,539.2 1116.8,538.4 1116.5,538.5 1116.0,539.5 1116.2,542.9 1116.0,543.7 1115.6,543.9 1112.6,542.1 1111.4,541.8 1108.4,541.6 1107.5,541.7 1106.6,542.0 1107.4,542.9 1115.9,550.9 1118.0,553.2 1121.8,558.2 1123.7,561.1 1124.0,561.7 1123.8,562.1 1123.3,562.0 1122.2,561.6 1116.4,558.9 1110.9,556.9 1108.6,556.4 1108.0,556.5 1107.5,556.9 1107.4,557.2 1108.4,558.6 1119.8,569.2 1121.7,571.6 1121.9,572.4 1121.7,572.8 1121.0,572.9 1117.1,571.9 1113.3,570.1 1112.8,570.0 1112.5,570.0 1112.4,570.4 1113.3,571.9 1116.3,575.5 1117.5,577.4 1118.6,579.8 1119.5,582.3 1121.0,589.0 1121.3,592.0 1121.2,598.7 1120.9,601.4 1120.2,604.5 1119.4,607.3 1117.9,611.2 1116.7,613.8 1115.0,616.5 1113.1,618.7 1108.1,623.5 1103.4,627.0 1098.1,630.0 1094.4,631.4 1091.4,631.8 1090.8,631.7 1090.7,631.4 1091.6,630.0 1097.5,624.6 1101.4,620.5 1105.2,615.5 1107.1,612.5 1107.3,611.8 1107.1,611.3 1106.9,611.1 1106.3,611.1 1096.7,614.4 1095.7,614.4 1095.2,614.0 1094.8,613.2 1095.0,612.4 1095.6,611.2 1104.8,599.6 1106.7,596.8 1107.0,596.0 1107.0,595.4 1106.8,595.0 1106.4,594.8 1104.9,595.0 1100.1,596.2 1099.1,596.3 1098.3,595.9 1098.0,595.3 1097.8,594.0 1098.3,591.0 1100.3,585.7 1101.7,581.1 1102.1,576.0 1102.0,572.7 1101.8,571.7 1100.8,570.3 1100.3,570.0 1099.7,570.0 1098.7,570.4 1098.0,571.0 1097.4,572.1 1095.8,578.2 1093.8,589.5 1093.4,591.3 1092.8,592.9 1092.5,592.7 1092.3,591.4 1092.1,589.3 1090.0,565.4 1089.4,562.5 1088.9,560.8 1087.6,558.6 1087.0,558.0 1086.5,557.9 1085.6,558.3 1085.5,558.6 1086.2,559.6 1086.4,560.5 1086.7,562.0 1087.0,567.2 1087.0,570.8 1086.9,571.8 1086.2,573.3 1085.7,573.5 1084.1,573.2 1083.3,572.3 1082.1,570.4 1075.8,555.9 1075.4,555.4 1075.1,555.4 1073.9,557.9 1072.7,561.7 1072.2,562.5 1071.4,562.8 1070.5,562.7 1066.8,561.3 1064.0,560.7 1062.3,560.6 1061.6,561.0 1061.8,561.5 1062.7,562.6 1068.5,567.8 1074.3,574.1 1077.2,578.2 1078.2,580.2 1080.6,586.1 1080.6,586.7 1080.3,587.0 1079.9,586.8 1079.1,586.1 1076.5,582.6 1074.3,580.2 1073.3,579.6 1071.2,578.9 1070.5,578.9 1069.5,579.6 1069.6,580.0 1070.1,580.7 1072.8,582.8 1075.5,585.7 1078.8,590.4 1080.0,592.6 1081.1,595.3 1081.9,597.9 1083.0,604.5 1083.2,607.5 1083.0,610.0 1082.5,613.6 1082.0,616.0 1081.2,618.6 1080.2,620.7 1077.3,625.5 1075.8,627.3 1074.3,628.7 1070.5,631.2 1069.1,631.8 1067.9,632.1 1066.5,632.1 1066.0,631.7 1066.2,630.7 1070.6,624.8 1073.0,620.7 1075.0,616.4 1075.5,615.1 1075.6,614.4 1075.4,613.9 1075.2,613.8 1074.6,614.0 1070.5,617.2 1065.5,620.8 1064.3,621.3 1063.6,621.3 1063.0,621.0 1062.8,620.3 1063.1,618.9 1067.3,608.9 1069.3,603.1 1070.2,599.6 1070.2,598.8 1069.9,598.3 1069.5,598.3 1069.0,598.7 1068.3,599.6 1060.7,610.6 1059.8,611.5 1059.3,611.6 1059.0,611.0 1058.9,610.1 1059.5,606.7 1063.8,591.2 1064.1,589.7 1064.1,588.9 1064.0,588.4 1063.8,588.3 1063.4,588.6 1061.3,591.2 1057.1,595.3 1056.0,596.2 1055.0,596.7 1054.4,596.7 1053.9,596.2 1053.7,595.2 1053.6,592.9 1053.7,581.9 1053.5,579.7 1053.2,578.7 1052.6,578.4 1052.1,578.8 1051.5,580.4 1049.6,589.2 1048.9,591.5 1048.6,591.5 1048.0,589.0 1046.8,579.4 1046.4,577.5 1045.9,576.6 1045.3,576.3 1044.8,576.4 1044.3,577.1 1042.7,580.9 1042.2,581.2 1041.6,580.8 1040.9,579.6 1039.9,578.8 1038.1,578.1 1032.4,577.0 1030.9,577.0 1030.6,577.7 1031.8,579.0 1036.9,583.3 1038.7,585.3 1041.7,589.7 1042.7,591.7 1043.6,594.1 1044.9,600.1 1045.1,602.7 1045.0,605.6 1044.5,608.3 1043.6,612.2 1042.7,614.8 1041.6,617.3 1040.3,619.4 1038.4,622.0 1036.8,623.6 1034.9,625.3 1032.9,626.5 1029.8,628.1 1028.3,628.6 1027.6,628.3 1027.8,627.3 1032.9,618.2 1033.2,617.0 1032.9,616.7 1032.0,617.1 1030.1,618.5 1028.0,619.7 1025.2,620.4 1024.2,620.4 1023.5,620.2 1023.2,619.8 1023.1,618.1 1023.5,616.8 1025.9,611.2 1027.7,605.1 1028.2,602.3 1028.2,601.4 1028.0,600.0 1027.7,600.0 1027.4,600.4 1024.8,605.1 1022.2,609.2 1019.6,612.4 1017.6,614.3 1015.1,616.3 1014.2,616.7 1012.9,617.0 1012.2,616.9 1011.7,616.3 1011.3,615.4 1011.1,612.5 1011.4,611.1 1011.9,609.9 1014.1,605.7 1015.0,602.7 1015.2,600.3 1014.5,597.8 1014.1,597.0 1013.5,596.4 1012.9,596.2 1011.9,596.2 1011.2,596.5 1010.6,597.1 1008.8,601.0 1006.9,607.7 1006.4,608.4 1006.2,608.3 1005.7,607.1 1005.1,604.3 1004.3,594.4 1003.5,592.1 1003.2,591.5 1002.7,591.5 1000.2,594.0 998.6,594.9 996.5,595.1 991.8,594.2 990.8,594.1 996.0,601.5 999.3,607.6 1000.8,611.1 1001.9,616.4 1002.0,618.1 1001.7,621.9 1000.8,625.0 998.9,628.4 997.8,629.6 996.4,630.9 994.9,631.9 990.8,633.8 989.1,634.2 985.6,634.4 984.7,634.3 984.2,633.9 984.3,633.4 985.8,631.5 992.3,625.4 993.1,624.4 993.4,623.7 993.1,623.3 992.6,623.1 991.5,623.3 986.1,625.2 985.3,625.3 985.1,625.0 989.3,617.3 989.7,616.2 989.7,615.7 989.4,615.3 989.0,615.4 987.6,616.8 985.7,619.4 984.8,620.1 984.6,619.9 984.3,618.4 984.2,611.6 983.8,606.0 983.4,604.7 983.0,604.0 982.1,603.2 981.4,602.9 980.6,602.9 978.3,604.0 977.6,604.6 977.1,605.3 977.0,606.1 977.8,616.8 977.5,620.5 976.6,624.1 975.9,625.7 973.9,628.7 972.9,629.8 970.4,631.7 967.2,633.5 965.0,634.2 963.1,634.2 962.6,634.0 962.4,633.6 962.4,632.9 962.7,632.1 969.6,621.9 970.9,619.6 971.0,618.6 970.6,618.3 970.1,618.5 969.2,619.1 960.7,627.4 959.8,628.0 959.2,628.1 959.1,627.6 959.4,625.5 960.6,623.5 962.5,621.1 962.8,620.5 962.7,620.1 961.7,619.7 958.3,619.1 957.4,618.7 954.2,616.1 952.0,615.5 951.0,616.0 950.5,616.6 950.3,617.2 950.7,619.1 952.3,623.4 952.8,626.3 952.8,627.5 952.3,629.8 950.9,632.2 950.2,633.0 949.4,633.5 947.3,634.5 945.5,634.7 943.6,634.3 943.2,633.9 943.1,633.4 943.6,630.7 944.5,627.7 944.5,626.6 944.1,626.2 943.7,626.2 943.0,626.4 939.2,628.2 938.9,628.2 938.1,626.6 937.2,625.5 936.7,625.3 935.3,625.6 931.4,628.0 924.4,633.3 917.0,639.5 910.1,645.8 909.2,646.5 908.8,646.8 908.7,646.6ZM1184.8,690.6 1184.5,686.3 1184.0,683.9 1183.3,681.9 1182.2,680.4 1100.3,681.6 1101.5,698.0 1184.6,695.7 1184.8,690.6ZM1096.1,713.2 1093.3,662.9 1068.2,662.9 1074.5,716.0 1096.1,713.2ZM1143.1,734.7 1144.4,733.5 1145.9,732.5 1147.4,732.0 1148.9,732.0 1150.6,732.6 1152.4,734.0 1154.1,736.4 1155.3,738.5 1183.4,739.0 1182.4,735.6 1181.0,732.4 1179.3,729.4 1177.3,726.7 1175.0,724.2 1172.4,722.0 1169.6,720.1 1166.5,718.5 1163.2,717.2 1159.6,716.3 1155.8,715.8 1151.8,715.6 1148.3,715.7 1144.8,716.2 1141.4,716.9 1138.0,718.0 1134.7,719.3 1131.5,721.0 1128.4,723.1 1125.4,725.4 1122.7,728.1 1120.1,731.1 1117.7,734.5 1115.5,738.3 1140.1,738.5 1143.1,734.7ZM1071.7,737.8 1094.4,738.5 1093.3,721.4 1071.0,722.6 1071.7,737.8ZM1082.5,760.6 1085.4,762.5 1088.7,764.1 1092.3,765.4 1096.2,766.3 1100.4,766.9 1105.0,767.1 1108.4,766.9 1111.8,766.3 1115.0,765.5 1118.1,764.2 1121.1,762.7 1123.8,760.8 1126.5,758.6 1128.9,756.2 1131.1,753.4 1133.2,750.4 1135.0,747.2 1136.6,743.7 1113.2,743.2 1110.8,747.1 1108.8,749.4 1106.6,750.9 1105.0,751.1 1102.4,750.6 1099.8,749.1 1097.6,746.6 1095.6,743.2 1072.7,743.2 1073.3,746.7 1074.4,750.0 1075.9,753.0 1077.7,755.8 1079.9,758.3 1082.5,760.6ZM1182.8,782.8 1182.3,779.6 1181.5,777.3 1180.3,775.7 1178.7,774.6 1068.7,777.6 1071.0,794.0 1182.9,792.8 1183.0,787.1 1182.8,782.8ZM1090.6,829.7 1091.8,828.2 1093.2,826.9 1094.8,825.7 1096.5,824.7 1098.4,823.9 1100.5,823.3 1102.7,822.9 1105.0,822.8 1107.3,822.9 1109.5,823.3 1111.6,823.9 1113.6,824.8 1117.3,827.0 1119.0,828.5 1122.1,831.8 1123.5,833.7 1126.0,837.8 1153.0,838.5 1181.8,816.7 1160.0,801.7 1138.9,823.3 1135.5,818.7 1133.4,816.6 1131.2,814.5 1128.6,812.7 1125.9,811.0 1122.9,809.5 1119.8,808.2 1116.4,807.1 1112.8,806.4 1109.0,805.9 1105.0,805.7 1099.8,806.0 1094.9,806.7 1090.2,808.0 1085.9,809.7 1081.9,811.8 1078.3,814.4 1075.2,817.3 1072.5,820.6 1070.4,824.2 1068.8,828.1 1067.8,832.2 1067.5,836.6 1088.1,836.6 1088.4,834.8 1088.9,833.0 1089.6,831.3 1090.6,829.7ZM1068.6,851.3 1069.5,853.6 1070.7,855.7 1072.4,857.7 1074.5,859.6 1184.6,858.4 1182.2,843.9 1068.0,840.8 1068.0,847.8 1068.6,851.3ZM1037.5,881.3 1056.3,880.6 1053.9,861.9 1034.7,863.5 1037.5,881.3ZM1184.6,888.8 1184.7,880.8 1184.4,877.0 1184.1,875.5 1183.7,874.2 1182.5,872.2 1181.8,871.4 1179.9,870.1 1067.5,873.6 1068.7,889.3 1113.2,890.0 1114.8,902.4 1136.6,902.4 1136.6,890.0 1184.6,888.8ZM1185.0,927.6 1184.6,924.1 1183.8,921.4 1182.6,919.5 1181.1,918.1 1137.7,918.8 1136.6,907.6 1115.5,907.6 1116.2,920.4 1068.7,921.6 1069.8,938.0 1184.6,938.0 1185.0,932.2 1185.0,927.6ZM1078.9,945.6 1076.2,946.2 1073.8,947.6 1072.8,948.5 1070.9,950.7 1069.5,953.4 1068.7,956.7 1069.8,967.3 1096.8,964.9 1099.1,950.9 1080.4,945.5 1078.9,945.6ZM1085.5,988.1 1090.1,990.5 1095.3,992.6 1101.0,994.4 1107.2,995.8 1113.9,996.8 1120.9,997.5 1128.4,997.7 1134.9,997.5 1141.3,996.8 1147.7,995.8 1154.0,994.3 1159.9,992.4 1165.6,990.1 1170.7,987.4 1175.4,984.3 1179.4,980.9 1182.7,977.1 1185.3,972.9 1186.9,968.4 1155.3,968.9 1154.3,970.6 1153.1,972.2 1151.6,973.7 1148.1,976.3 1146.1,977.4 1141.5,979.1 1139.0,979.8 1133.6,980.5 1130.7,980.6 1124.7,980.4 1118.7,979.6 1112.9,978.3 1110.2,977.5 1105.4,975.3 1103.4,973.9 1101.6,972.4 1100.3,970.8 1071.7,971.9 1073.1,975.6 1075.2,979.1 1078.0,982.4 1081.4,985.4 1085.5,988.1ZM1448.3,543.9 1445.8,540.4 1443.6,536.5 1441.8,532.3 1440.2,527.6 1439.1,522.6 1438.3,517.1 1438.0,511.3 1440.3,497.0 1435.9,491.8 1418.1,474.2 1412.0,473.2 1404.8,475.9 1400.5,477.2 1396.4,478.2 1392.4,478.8 1386.4,479.1 1381.9,478.8 1377.5,478.1 1373.3,477.0 1369.1,475.5 1365.1,473.6 1361.4,471.4 1357.8,468.9 1354.6,466.0 1351.6,462.8 1349.0,459.3 1346.8,455.5 1344.9,451.5 1332.7,452.3 1335.2,457.9 1338.2,463.2 1341.7,468.0 1345.6,472.5 1349.9,476.5 1354.6,480.1 1359.5,483.2 1364.8,485.8 1370.3,487.9 1376.0,489.4 1381.9,490.4 1388.0,490.8 1392.0,490.6 1397.8,489.9 1403.6,488.6 1411.6,486.2 1427.3,499.6 1427.6,501.8 1426.6,508.2 1426.1,514.5 1426.2,520.6 1426.5,523.6 1427.4,529.4 1428.1,532.1 1429.9,537.3 1431.9,541.4 1434.2,545.3 1436.6,548.9 1439.2,552.2 1441.9,555.3 1444.8,558.1 1447.8,560.7 1450.9,563.1 1454.1,565.2 1457.4,567.0 1464.0,570.1 1464.4,556.8 1460.8,554.8 1457.4,552.6 1454.1,550.0 1451.1,547.1 1448.3,543.9ZM1317.9,694.2 1319.8,692.7 1321.8,691.6 1324.0,691.0 1326.0,691.0 1328.6,691.8 1331.4,693.7 1334.3,696.9 1336.3,699.9 1380.1,700.3 1378.3,694.9 1376.0,689.8 1373.0,685.0 1369.6,680.5 1365.6,676.5 1361.2,672.9 1356.4,669.8 1351.2,667.1 1345.7,665.0 1339.9,663.5 1333.8,662.5 1327.4,662.2 1321.6,662.5 1316.0,663.3 1310.5,664.7 1305.1,666.6 1300.0,669.0 1295.0,671.9 1290.4,675.4 1286.0,679.3 1281.9,683.7 1278.1,688.6 1274.8,693.9 1271.7,699.6 1313.4,699.6 1316.1,696.1 1317.9,694.2ZM1239.0,699.1 1237.3,672.2 1201.1,673.4 1202.2,698.7 1239.0,699.1ZM1381.9,729.4 1382.6,723.6 1382.9,718.1 1382.5,710.9 1381.7,707.3 1339.1,707.3 1339.1,731.9 1380.1,737.8 1380.8,735.1 1381.9,729.4ZM1217.9,730.7 1222.1,734.3 1226.7,737.4 1231.7,740.0 1237.0,742.0 1242.6,743.6 1248.6,744.5 1254.9,744.8 1260.6,744.5 1266.2,743.6 1271.5,742.1 1276.6,740.0 1281.5,737.5 1286.1,734.4 1290.4,730.9 1294.4,726.9 1298.2,722.6 1301.6,717.8 1304.8,712.7 1307.6,707.3 1266.6,706.6 1263.0,712.8 1260.2,716.4 1258.2,718.0 1257.1,718.6 1254.9,719.0 1253.7,718.9 1251.4,718.2 1250.3,717.5 1248.0,715.7 1244.9,711.8 1242.0,706.6 1203.4,706.2 1205.4,711.8 1207.9,717.2 1210.8,722.1 1214.2,726.6 1217.9,730.7ZM1184.5,758.5 1185.1,753.9 1185.1,750.6 1184.8,747.2 1184.1,743.7 1157.6,743.7 1158.8,760.0 1183.4,762.4 1184.5,758.5ZM1381.7,772.9 1376.6,747.1 1198.7,781.1 1203.4,802.1 1381.7,772.9ZM1313.4,809.1 1268.9,799.8 1211.6,809.1 1377.8,848.5 1382.4,824.4 1340.3,812.7 1338.7,790.0 1312.2,793.9 1313.4,809.1ZM1297.0,891.1 1381.7,886.9 1380.1,860.2 1226.8,865.3 1297.0,891.1ZM1346.6,929.7 1341.5,915.6 1207.6,867.7 1194.5,894.6 1292.3,930.9 1197.6,960.1 1203.4,987.0 1340.3,948.4 1345.0,942.6 1346.6,929.7ZM1185.0,957.2 1183.6,954.4 1181.8,952.0 1179.8,950.0 1177.6,948.5 1153.0,953.2 1156.5,964.9 1186.9,963.7 1186.1,960.3 1185.0,957.2ZM1381.3,990.5 1377.8,964.8 1301.7,967.1 1209.3,995.2 1381.3,990.5ZM924.4,1026.7 933.0,1033.1 935.3,1034.4 936.7,1034.7 937.6,1034.1 938.9,1031.8 939.2,1031.8 943.0,1033.6 944.1,1033.8 944.5,1033.4 944.5,1032.3 943.6,1029.3 943.1,1026.6 943.2,1026.1 943.6,1025.7 944.3,1025.4 946.3,1025.3 947.3,1025.5 949.4,1026.5 950.9,1027.8 951.5,1028.7 952.3,1030.2 952.8,1032.5 952.8,1033.7 952.3,1036.6 950.7,1040.9 950.3,1042.8 950.5,1043.4 951.0,1044.0 952.0,1044.5 954.2,1043.9 957.4,1041.3 958.3,1040.9 961.7,1040.3 962.7,1039.9 962.8,1039.5 962.5,1038.9 960.6,1036.5 959.4,1034.5 959.1,1032.4 959.2,1031.9 959.8,1032.0 960.7,1032.6 969.2,1040.9 970.1,1041.5 970.6,1041.7 971.0,1041.4 970.9,1040.4 969.6,1038.1 962.7,1027.9 962.4,1027.1 962.4,1026.4 962.6,1026.0 963.1,1025.8 965.0,1025.8 966.0,1026.1 968.5,1027.2 970.4,1028.3 972.9,1030.2 975.1,1033.1 976.6,1035.9 977.5,1039.5 977.8,1043.2 977.0,1053.9 977.1,1054.7 977.6,1055.4 978.3,1056.0 980.6,1057.1 981.4,1057.1 982.1,1056.8 983.0,1056.0 983.4,1055.3 983.8,1054.0 984.2,1048.4 984.3,1041.6 984.6,1040.1 984.8,1039.9 985.1,1040.0 985.7,1040.6 987.6,1043.2 989.0,1044.6 989.4,1044.7 989.7,1044.3 989.7,1043.8 989.3,1042.7 985.1,1035.0 985.3,1034.7 986.1,1034.8 991.5,1036.7 992.6,1036.9 993.1,1036.7 993.4,1036.3 993.1,1035.6 992.3,1034.6 985.8,1028.5 984.3,1026.6 984.2,1026.1 984.7,1025.7 985.6,1025.6 989.1,1025.8 992.4,1026.9 994.9,1028.1 996.4,1029.1 997.8,1030.4 998.9,1031.6 1000.8,1035.0 1001.7,1038.1 1002.0,1041.9 1001.9,1043.6 1000.8,1048.9 999.3,1052.4 996.0,1058.5 990.8,1065.9 991.8,1065.8 996.5,1064.9 998.6,1065.1 1000.2,1066.0 1002.7,1068.5 1003.2,1068.5 1003.5,1067.9 1004.3,1065.6 1005.1,1055.7 1005.7,1052.9 1006.2,1051.7 1006.4,1051.6 1006.9,1052.3 1008.8,1059.0 1010.6,1062.9 1011.2,1063.5 1011.9,1063.8 1012.9,1063.8 1013.5,1063.6 1014.1,1063.0 1014.5,1062.2 1015.2,1059.7 1015.0,1057.3 1014.1,1054.3 1011.9,1050.1 1011.4,1048.9 1011.1,1047.5 1011.3,1044.6 1011.7,1043.7 1012.2,1043.1 1012.9,1043.0 1014.2,1043.3 1015.1,1043.7 1016.4,1044.6 1019.6,1047.6 1022.2,1050.8 1024.8,1054.9 1027.4,1059.6 1027.7,1060.0 1028.0,1060.0 1028.2,1058.6 1028.2,1057.7 1027.1,1052.4 1025.9,1048.8 1023.5,1043.2 1023.0,1041.0 1023.2,1040.2 1023.5,1039.8 1024.2,1039.6 1025.2,1039.6 1028.0,1040.3 1030.1,1041.5 1032.0,1042.9 1032.6,1043.2 1032.9,1043.3 1033.2,1043.0 1033.2,1042.6 1032.4,1040.9 1027.8,1032.7 1027.6,1031.7 1028.3,1031.4 1029.8,1031.9 1032.9,1033.5 1034.9,1034.7 1036.8,1036.4 1038.4,1038.0 1040.3,1040.6 1041.6,1042.7 1042.7,1045.2 1043.6,1047.8 1044.5,1051.7 1045.0,1054.4 1045.1,1057.3 1044.9,1059.9 1043.6,1065.9 1042.7,1068.3 1041.7,1070.3 1038.7,1074.7 1036.9,1076.7 1031.8,1081.0 1030.6,1082.3 1030.9,1083.0 1032.4,1083.0 1038.1,1081.9 1039.9,1081.2 1040.9,1080.4 1041.6,1079.2 1042.2,1078.8 1042.7,1079.1 1043.2,1080.0 1044.3,1082.9 1044.8,1083.6 1045.3,1083.7 1045.9,1083.4 1046.4,1082.5 1046.8,1080.6 1048.0,1071.0 1048.6,1068.5 1048.9,1068.5 1049.6,1070.8 1051.5,1079.6 1052.1,1081.2 1052.6,1081.6 1053.2,1081.3 1053.5,1080.3 1053.7,1078.1 1053.6,1067.1 1053.7,1064.8 1053.9,1063.8 1054.4,1063.3 1055.0,1063.3 1057.1,1064.7 1061.3,1068.8 1063.4,1071.4 1063.8,1071.7 1064.0,1071.6 1064.1,1071.1 1064.1,1070.3 1063.8,1068.8 1060.9,1058.9 1059.1,1051.4 1059.0,1049.0 1059.3,1048.4 1059.8,1048.5 1060.7,1049.4 1069.0,1061.3 1069.5,1061.7 1069.9,1061.7 1070.2,1061.2 1069.9,1058.9 1068.2,1053.5 1066.3,1048.5 1063.9,1042.9 1062.8,1039.7 1063.0,1039.0 1063.6,1038.7 1064.3,1038.7 1065.5,1039.2 1070.5,1042.8 1074.6,1046.0 1075.2,1046.2 1075.4,1046.1 1075.6,1045.6 1075.5,1044.9 1075.0,1043.6 1073.0,1039.3 1070.6,1035.2 1066.2,1029.3 1066.0,1028.3 1066.5,1027.9 1067.9,1027.9 1069.1,1028.2 1070.5,1028.8 1074.3,1031.3 1075.8,1032.7 1077.3,1034.5 1080.2,1039.3 1081.2,1041.4 1082.0,1044.0 1082.5,1046.4 1083.0,1050.0 1083.2,1052.5 1083.0,1055.5 1081.9,1062.1 1081.1,1064.7 1080.0,1067.4 1078.8,1069.6 1075.5,1074.3 1072.8,1077.2 1070.1,1079.3 1069.6,1080.0 1069.5,1080.4 1070.0,1080.9 1071.2,1081.1 1073.3,1080.4 1074.3,1079.8 1076.5,1077.4 1079.1,1073.9 1079.9,1073.2 1080.3,1073.0 1080.6,1073.3 1080.6,1073.9 1078.2,1079.8 1077.2,1081.8 1074.3,1085.9 1068.5,1092.2 1062.7,1097.4 1061.8,1098.5 1061.6,1099.0 1062.3,1099.4 1064.0,1099.3 1066.8,1098.7 1070.5,1097.3 1071.4,1097.2 1072.2,1097.5 1072.7,1098.3 1073.9,1102.1 1075.1,1104.6 1075.4,1104.6 1075.8,1104.1 1082.1,1089.6 1083.3,1087.7 1084.1,1086.8 1085.1,1086.5 1085.7,1086.5 1086.2,1086.7 1086.9,1088.2 1087.0,1089.2 1087.0,1092.8 1086.7,1098.0 1086.4,1099.5 1086.2,1100.4 1085.5,1101.4 1085.6,1101.7 1086.5,1102.1 1087.0,1102.0 1087.6,1101.4 1088.9,1099.2 1089.4,1097.5 1090.0,1094.6 1092.1,1070.7 1092.3,1068.6 1092.5,1067.3 1092.8,1067.1 1093.4,1068.7 1093.8,1070.5 1095.8,1081.8 1097.4,1087.9 1098.0,1089.0 1098.7,1089.6 1099.7,1090.0 1100.3,1090.0 1100.8,1089.7 1101.8,1088.3 1102.0,1087.3 1102.1,1084.0 1101.7,1078.9 1100.3,1074.3 1098.3,1069.0 1097.9,1067.2 1097.8,1066.0 1098.0,1064.7 1098.3,1064.1 1099.1,1063.7 1100.1,1063.8 1104.9,1065.0 1106.4,1065.2 1106.8,1065.0 1107.0,1064.6 1107.0,1064.0 1105.9,1061.9 1104.8,1060.4 1095.6,1048.8 1095.0,1047.6 1094.8,1046.8 1095.2,1046.0 1095.7,1045.6 1096.7,1045.6 1106.3,1048.9 1106.9,1048.9 1107.1,1048.7 1107.3,1048.2 1107.1,1047.5 1105.2,1044.5 1101.4,1039.5 1097.5,1035.4 1091.6,1030.0 1090.7,1028.6 1090.8,1028.3 1091.4,1028.2 1094.4,1028.6 1098.1,1030.0 1103.4,1033.0 1108.1,1036.5 1113.1,1041.3 1115.0,1043.5 1116.7,1046.2 1117.9,1048.8 1119.4,1052.7 1120.2,1055.5 1120.9,1058.6 1121.2,1061.3 1121.3,1068.0 1121.0,1071.0 1119.5,1077.7 1118.6,1080.2 1117.5,1082.6 1116.3,1084.5 1113.3,1088.1 1112.4,1089.6 1112.5,1090.0 1113.3,1089.9 1117.1,1088.1 1121.0,1087.1 1121.7,1087.2 1121.9,1087.6 1121.7,1088.4 1119.8,1090.8 1108.4,1101.4 1107.4,1102.8 1107.5,1103.1 1108.0,1103.5 1108.6,1103.6 1110.9,1103.1 1116.4,1101.1 1122.2,1098.4 1123.8,1097.9 1124.0,1098.3 1122.9,1100.2 1121.8,1101.8 1118.0,1106.8 1115.9,1109.1 1107.4,1117.1 1106.6,1118.0 1107.5,1118.3 1108.4,1118.4 1111.4,1118.2 1112.6,1117.9 1115.6,1116.1 1116.0,1116.3 1116.2,1117.1 1116.0,1120.5 1116.5,1121.5 1116.8,1121.6 1117.7,1120.8 1122.5,1114.0 1123.4,1113.0 1124.0,1112.8 1124.3,1113.2 1124.9,1116.3 1125.7,1117.0 1126.1,1116.9 1126.6,1116.2 1127.9,1113.3 1131.1,1104.6 1131.7,1103.6 1132.3,1103.1 1133.1,1103.0 1133.8,1103.5 1134.6,1105.1 1135.4,1107.4 1137.5,1113.9 1138.2,1115.3 1138.5,1115.6 1138.9,1114.9 1138.9,1114.0 1138.5,1109.9 1136.7,1100.2 1134.3,1090.8 1130.6,1078.9 1130.3,1077.2 1130.4,1076.4 1130.9,1076.1 1131.3,1076.3 1132.1,1077.0 1135.0,1081.4 1136.5,1083.0 1137.8,1083.7 1138.2,1083.5 1138.9,1082.0 1138.9,1081.0 1138.8,1079.3 1137.6,1072.3 1137.6,1070.9 1137.8,1070.2 1138.5,1069.9 1139.1,1070.1 1140.0,1071.0 1146.2,1080.3 1146.6,1080.4 1146.9,1080.2 1147.2,1079.6 1147.2,1078.7 1146.1,1075.3 1142.7,1067.0 1138.8,1058.4 1133.1,1047.5 1132.5,1046.0 1132.5,1045.2 1133.0,1044.9 1133.6,1045.0 1135.8,1046.3 1137.9,1048.0 1141.0,1050.7 1145.5,1055.7 1146.4,1056.5 1146.9,1056.7 1147.2,1056.3 1147.1,1055.6 1146.7,1054.1 1143.4,1046.2 1142.1,1043.9 1139.1,1040.1 1138.5,1039.0 1138.7,1038.2 1139.6,1038.0 1141.9,1038.1 1143.7,1038.5 1145.8,1039.3 1151.2,1042.4 1153.3,1044.0 1155.4,1046.2 1157.0,1048.5 1160.0,1054.5 1160.9,1057.2 1161.4,1059.6 1161.7,1062.8 1161.8,1065.1 1161.5,1067.7 1161.0,1070.0 1159.2,1075.5 1156.8,1080.4 1152.9,1086.9 1152.1,1087.9 1158.6,1083.1 1160.2,1082.3 1160.4,1082.7 1159.4,1085.1 1150.4,1102.3 1149.2,1105.6 1149.3,1106.3 1149.9,1106.6 1150.5,1106.6 1151.3,1106.2 1153.4,1104.2 1158.2,1098.7 1159.9,1097.2 1160.2,1097.3 1160.3,1098.7 1158.8,1104.8 1158.0,1106.9 1156.8,1109.3 1155.4,1111.6 1149.6,1119.8 1143.8,1127.5 1142.3,1129.7 1142.3,1130.0 1142.6,1130.2 1143.2,1130.2 1146.9,1129.8 1149.3,1128.8 1151.0,1127.8 1151.9,1127.6 1152.8,1127.9 1153.3,1128.9 1154.1,1131.8 1154.5,1132.5 1154.8,1132.6 1155.3,1132.3 1155.8,1131.4 1156.7,1129.6 1162.1,1116.3 1163.7,1113.2 1164.5,1112.3 1164.9,1112.5 1165.1,1114.0 1164.9,1117.8 1164.2,1121.7 1162.2,1128.4 1162.0,1129.8 1162.1,1130.7 1162.6,1131.5 1163.0,1131.9 1163.6,1131.9 1165.2,1130.7 1166.1,1129.7 1166.6,1126.3 1168.4,1118.4 1169.0,1113.3 1169.3,1103.9 1169.0,1093.2 1169.2,1090.7 1169.9,1091.3 1172.3,1096.2 1173.3,1097.6 1174.1,1097.9 1174.4,1097.7 1174.7,1096.1 1174.5,1093.2 1173.1,1085.7 1173.1,1083.2 1173.4,1082.5 1173.8,1082.5 1174.4,1083.3 1175.1,1084.7 1180.0,1096.0 1180.6,1096.7 1181.0,1096.8 1181.5,1096.5 1181.7,1095.7 1181.7,1094.0 1180.5,1085.1 1176.4,1068.3 1175.8,1064.8 1176.2,1064.4 1176.7,1064.4 1177.7,1064.7 1180.9,1066.2 1183.1,1067.0 1183.6,1067.0 1183.9,1066.6 1183.8,1065.9 1182.0,1062.5 1178.5,1056.7 1175.2,1052.7 1173.0,1050.5 1172.1,1049.3 1172.1,1048.5 1173.0,1048.2 1175.2,1048.4 1176.8,1048.7 1178.7,1049.5 1182.8,1052.2 1184.4,1053.7 1186.2,1055.7 1189.8,1061.3 1191.0,1063.9 1191.9,1067.1 1192.4,1070.1 1192.8,1074.6 1192.8,1077.7 1192.5,1081.1 1192.0,1084.1 1190.1,1091.0 1187.9,1096.2 1183.2,1105.0 1182.1,1107.1 1181.3,1109.2 1181.4,1109.7 1181.7,1110.1 1182.3,1110.0 1184.6,1108.9 1186.8,1107.5 1188.0,1107.0 1188.8,1107.0 1189.1,1107.5 1188.6,1110.1 1186.8,1113.5 1185.1,1116.2 1182.3,1120.2 1177.8,1125.8 1177.1,1126.9 1177.0,1127.6 1177.3,1128.1 1177.9,1128.1 1179.0,1127.7 1184.1,1124.6 1185.2,1124.1 1185.8,1124.1 1186.1,1124.4 1186.1,1126.1 1185.1,1129.9 1184.3,1131.5 1183.1,1133.3 1181.7,1134.8 1173.3,1141.7 1172.6,1142.5 1172.3,1143.1 1172.6,1143.6 1173.4,1144.1 1174.3,1144.3 1177.0,1143.9 1181.0,1142.7 1183.4,1141.3 1184.6,1140.3 1185.4,1140.1 1186.0,1140.5 1186.3,1141.4 1187.3,1145.8 1188.2,1146.9 1188.6,1146.9 1189.2,1146.5 1190.9,1144.2 1192.3,1140.8 1193.9,1132.9 1195.0,1124.9 1195.3,1123.4 1195.8,1122.5 1196.3,1122.6 1197.7,1124.5 1199.6,1128.3 1200.0,1128.4 1200.9,1127.0 1201.0,1125.8 1201.0,1123.8 1199.7,1114.6 1199.5,1112.0 1200.0,1107.6 1200.3,1106.5 1200.9,1106.2 1201.7,1106.8 1203.6,1109.7 1205.6,1113.9 1205.9,1113.9 1206.0,1113.3 1206.2,1112.0 1206.0,1108.6 1204.3,1097.9 1204.2,1094.7 1204.4,1094.0 1205.0,1094.2 1205.7,1095.0 1208.0,1098.4 1209.6,1100.2 1210.4,1100.8 1210.8,1100.8 1211.0,1100.2 1209.7,1094.5 1203.4,1077.2 1202.6,1074.2 1202.9,1073.8 1203.5,1074.0 1209.3,1078.4 1210.0,1078.6 1210.3,1078.2 1210.3,1077.2 1209.7,1075.1 1207.6,1070.2 1201.4,1058.2 1200.2,1055.0 1200.5,1054.8 1201.2,1055.0 1207.4,1058.6 1210.4,1060.0 1211.0,1060.0 1211.2,1059.3 1211.0,1058.5 1209.7,1055.5 1206.9,1050.8 1203.6,1046.6 1201.0,1043.9 1199.9,1042.6 1199.9,1042.0 1201.0,1042.3 1203.6,1043.7 1205.4,1045.1 1207.3,1047.1 1209.1,1049.4 1211.5,1053.2 1213.1,1056.4 1214.7,1060.6 1216.0,1065.0 1217.8,1071.9 1218.7,1076.8 1219.4,1082.2 1219.7,1087.1 1219.5,1098.7 1219.2,1103.6 1218.7,1107.7 1217.2,1116.8 1216.4,1120.3 1213.8,1128.6 1213.4,1130.3 1213.4,1131.3 1214.1,1132.6 1214.7,1132.8 1216.3,1132.4 1217.1,1131.8 1217.9,1130.8 1222.2,1121.9 1222.7,1121.6 1223.1,1122.3 1223.4,1123.8 1224.0,1128.7 1224.8,1131.1 1225.5,1131.8 1226.1,1131.9 1226.7,1131.7 1227.2,1131.0 1228.1,1129.6 1228.6,1128.1 1229.0,1125.7 1229.4,1118.0 1229.3,1111.3 1228.3,1102.6 1228.3,1101.1 1228.5,1100.5 1229.0,1100.5 1229.6,1100.8 1230.5,1101.4 1234.4,1105.2 1236.5,1106.8 1238.4,1107.7 1238.9,1107.7 1239.2,1107.5 1239.4,1106.8 1239.1,1105.7 1238.4,1103.5 1235.2,1095.9 1232.9,1089.4 1231.5,1083.3 1231.1,1081.2 1230.9,1078.0 1231.1,1076.6 1231.5,1076.0 1232.3,1075.9 1233.4,1076.2 1236.4,1077.8 1237.5,1078.0 1238.3,1078.0 1239.2,1077.7 1239.5,1077.1 1239.5,1076.0 1238.3,1072.2 1237.4,1070.2 1236.0,1067.5 1230.1,1057.7 1229.3,1056.0 1229.3,1055.4 1230.7,1055.8 1236.2,1058.8 1237.1,1059.0 1237.5,1058.9 1237.7,1058.2 1237.0,1055.8 1233.5,1048.8 1232.0,1046.7 1227.8,1041.6 1227.8,1041.1 1228.6,1041.2 1230.7,1042.1 1232.3,1043.2 1234.3,1045.2 1239.5,1051.7 1241.4,1054.9 1243.3,1058.7 1244.8,1062.4 1246.5,1067.9 1247.5,1071.7 1248.2,1076.0 1248.6,1079.7 1248.8,1084.9 1248.6,1088.7 1248.1,1093.2 1247.2,1097.4 1245.7,1103.6 1244.4,1107.8 1242.7,1112.3 1240.9,1116.1 1236.7,1124.3 1235.8,1126.6 1235.5,1127.8 1235.9,1128.5 1236.4,1128.6 1237.5,1128.2 1242.7,1124.8 1243.7,1124.3 1244.2,1124.5 1244.3,1125.2 1243.8,1128.1 1242.0,1134.6 1240.8,1137.3 1239.1,1140.0 1237.2,1142.2 1229.3,1149.5 1229.1,1149.9 1229.4,1150.2 1231.4,1150.6 1234.0,1150.3 1239.4,1148.5 1240.7,1148.1 1242.1,1148.0 1242.7,1147.1 1243.3,1144.8 1245.7,1132.5 1246.6,1129.4 1246.9,1129.6 1247.2,1130.6 1248.3,1145.0 1248.5,1147.5 1248.8,1148.8 1249.1,1149.5 1249.4,1149.1 1249.9,1147.5 1251.9,1137.6 1252.4,1136.1 1252.8,1135.9 1253.8,1138.1 1256.1,1146.0 1257.5,1149.9 1258.0,1150.8 1258.7,1151.3 1259.1,1151.3 1259.4,1150.8 1259.6,1149.8 1259.8,1147.9 1259.9,1142.3 1259.5,1127.3 1259.1,1121.5 1260.7,1124.1 1265.8,1134.2 1269.3,1140.6 1270.2,1141.8 1270.8,1142.1 1271.1,1141.8 1271.1,1140.7 1270.2,1136.0 1264.8,1115.7 1263.9,1110.0 1264.0,1106.3 1264.2,1105.5 1264.6,1105.3 1265.3,1105.6 1266.6,1107.1 1271.0,1114.1 1271.4,1114.4 1271.7,1114.4 1272.3,1113.4 1272.1,1109.7 1269.7,1095.6 1269.8,1094.6 1270.1,1094.2 1270.6,1094.5 1271.4,1095.4 1275.4,1101.9 1278.3,1107.6 1283.4,1118.5 1283.6,1118.8 1283.9,1118.8 1284.5,1117.8 1284.5,1116.8 1284.0,1114.9 1282.0,1108.4 1279.9,1100.7 1276.8,1085.5 1276.4,1081.3 1276.7,1081.0 1277.2,1081.0 1278.0,1081.2 1286.8,1086.1 1287.5,1086.3 1287.8,1086.1 1288.0,1085.6 1287.7,1084.5 1285.1,1079.0 1280.2,1069.6 1277.5,1065.3 1270.6,1056.1 1268.8,1053.3 1268.4,1051.5 1269.5,1051.2 1272.6,1052.0 1274.9,1053.0 1277.4,1054.6 1279.8,1056.4 1283.3,1059.5 1285.4,1062.3 1287.5,1066.2 1289.0,1070.5 1290.7,1077.4 1291.6,1082.0 1292.1,1086.8 1292.2,1090.7 1291.5,1099.6 1290.0,1107.3 1287.7,1115.9 1286.3,1122.3 1285.3,1128.5 1285.3,1130.5 1285.6,1131.8 1286.8,1133.9 1287.4,1134.3 1288.0,1134.4 1288.9,1134.0 1289.5,1133.4 1290.4,1132.0 1293.1,1125.5 1293.7,1124.4 1294.1,1124.1 1294.4,1124.4 1294.6,1125.4 1294.1,1135.0 1293.2,1141.8 1291.5,1149.0 1289.6,1154.6 1285.1,1163.5 1284.8,1164.5 1285.0,1166.0 1285.4,1166.5 1287.2,1166.9 1287.9,1166.8 1288.8,1166.1 1290.4,1163.2 1294.2,1154.8 1295.0,1153.3 1295.8,1152.6 1296.5,1152.7 1297.7,1154.9 1300.1,1162.5 1300.6,1163.5 1301.1,1163.7 1301.6,1163.4 1301.9,1162.1 1302.0,1159.4 1300.7,1130.0 1300.7,1127.1 1300.9,1125.1 1301.3,1124.7 1302.0,1125.4 1302.7,1126.5 1307.7,1139.3 1308.3,1140.3 1309.2,1141.4 1309.6,1141.4 1309.9,1141.1 1310.3,1140.3 1310.4,1139.3 1310.1,1135.4 1309.5,1131.6 1306.5,1115.4 1306.3,1113.3 1306.5,1112.2 1307.0,1111.4 1307.5,1111.4 1308.2,1112.0 1308.9,1113.1 1310.9,1117.3 1312.9,1122.8 1317.7,1137.1 1318.1,1137.4 1318.5,1137.0 1319.1,1135.9 1319.3,1134.5 1319.3,1129.3 1318.8,1121.8 1318.9,1119.4 1319.7,1120.7 1320.5,1122.7 1324.9,1136.3 1325.3,1137.8 1325.4,1139.9 1325.4,1143.8 1324.1,1173.1 1324.2,1174.7 1324.4,1175.6 1324.9,1175.5 1325.9,1174.4 1328.1,1170.3 1329.3,1167.6 1330.8,1163.3 1332.1,1157.6 1332.6,1156.1 1333.2,1155.7 1333.7,1156.4 1336.0,1162.8 1339.4,1171.2 1341.0,1174.0 1341.7,1174.7 1342.2,1174.9 1342.6,1174.6 1343.3,1172.4 1343.6,1168.5 1343.4,1161.3 1343.0,1158.1 1341.7,1151.4 1339.5,1143.8 1338.1,1137.8 1337.4,1134.0 1337.1,1131.9 1337.1,1130.4 1337.4,1129.9 1338.1,1129.9 1338.8,1130.1 1339.6,1130.7 1343.0,1133.8 1343.9,1134.2 1344.6,1134.3 1345.3,1133.9 1345.7,1133.5 1345.8,1132.9 1345.4,1131.1 1344.7,1129.8 1336.7,1118.4 1333.7,1112.9 1332.2,1109.5 1330.3,1104.7 1328.9,1099.5 1328.6,1097.8 1328.6,1096.4 1328.9,1095.8 1329.7,1095.4 1330.5,1095.5 1331.6,1096.3 1333.0,1097.5 1338.1,1102.5 1340.5,1104.6 1341.3,1105.1 1341.9,1105.2 1342.4,1105.0 1342.7,1104.2 1342.8,1103.3 1342.1,1100.1 1341.2,1097.1 1340.2,1094.8 1338.6,1092.2 1336.8,1089.6 1331.8,1083.5 1324.7,1075.7 1324.1,1074.7 1324.1,1074.1 1324.9,1073.7 1325.7,1073.7 1327.0,1074.0 1332.9,1076.3 1334.5,1076.6 1335.8,1076.5 1337.3,1076.1 1338.0,1075.7 1338.3,1074.8 1338.1,1073.7 1337.4,1071.8 1336.4,1070.2 1334.8,1068.2 1319.8,1052.8 1319.0,1051.6 1318.9,1050.9 1319.3,1050.1 1319.9,1049.7 1321.1,1049.6 1322.6,1049.7 1325.2,1050.1 1327.2,1050.7 1329.6,1052.1 1331.8,1053.8 1335.2,1056.8 1337.5,1059.3 1339.9,1062.5 1341.8,1065.9 1344.5,1071.2 1346.1,1075.2 1347.8,1080.0 1349.0,1084.8 1351.5,1097.2 1353.2,1109.3 1354.1,1118.0 1355.3,1130.7 1356.8,1149.4 1357.3,1152.6 1357.8,1153.9 1358.6,1153.9 1359.1,1153.6 1359.9,1152.9 1361.8,1150.0 1362.5,1148.4 1363.8,1144.2 1364.6,1140.8 1365.1,1139.5 1365.7,1139.5 1366.2,1140.8 1367.0,1144.2 1368.1,1147.6 1368.6,1148.3 1369.4,1148.7 1369.8,1148.1 1370.1,1146.2 1370.2,1143.3 1369.8,1113.3 1369.9,1108.6 1370.2,1105.6 1370.6,1105.1 1373.1,1108.8 1375.0,1111.4 1375.7,1112.0 1376.3,1112.2 1376.6,1111.8 1377.0,1110.7 1377.0,1107.7 1375.8,1102.3 1375.1,1099.7 1373.0,1093.6 1370.1,1086.6 1369.4,1084.6 1369.2,1083.7 1369.4,1083.4 1370.5,1084.2 1379.0,1095.0 1379.7,1095.5 1380.0,1095.4 1380.2,1094.6 1379.7,1091.8 1377.7,1085.9 1375.0,1079.2 1369.3,1066.7 1368.4,1064.4 1368.2,1063.3 1368.6,1062.9 1369.0,1063.1 1369.8,1063.8 1373.4,1068.9 1375.0,1070.8 1379.3,1075.3 1382.0,1077.4 1382.6,1077.5 1383.0,1077.0 1383.0,1076.1 1381.8,1072.4 1379.1,1066.4 1377.6,1063.8 1365.9,1047.4 1363.5,1043.4 1363.2,1042.4 1363.4,1041.7 1363.9,1041.3 1364.9,1041.0 1370.1,1040.7 1371.2,1040.4 1371.8,1040.0 1372.2,1039.3 1371.9,1038.6 1370.9,1037.5 1369.3,1036.4 1364.7,1033.4 1363.7,1032.3 1363.4,1031.6 1363.8,1030.9 1364.9,1030.5 1367.2,1030.4 1370.4,1030.4 1407.2,1033.2 1412.7,1033.2 1413.1,1032.8 1413.3,1031.5 1413.5,1028.6 1413.5,1009.5 1085.4,1009.4 937.5,1009.7 912.6,1009.9 911.4,1010.5 909.9,1011.4 908.7,1013.4 908.8,1013.2 909.2,1013.5 910.1,1014.2 917.0,1020.5 924.4,1026.7ZM1447.8,1099.7 1444.8,1102.3 1441.9,1105.1 1439.2,1108.2 1436.6,1111.5 1434.2,1115.1 1431.9,1119.0 1429.9,1123.1 1428.9,1125.6 1427.4,1131.0 1426.9,1133.8 1426.2,1139.8 1426.1,1142.8 1426.3,1149.1 1427.1,1155.4 1427.6,1158.6 1427.3,1160.8 1411.6,1174.2 1403.6,1171.8 1397.8,1170.5 1392.0,1169.8 1388.0,1169.6 1381.9,1170.0 1376.0,1171.0 1370.3,1172.5 1364.8,1174.6 1359.5,1177.2 1354.6,1180.3 1349.9,1183.9 1345.6,1187.9 1341.7,1192.4 1338.2,1197.2 1335.2,1202.5 1332.7,1208.1 1344.9,1208.9 1346.8,1204.9 1349.0,1201.1 1351.6,1197.6 1354.6,1194.4 1357.8,1191.5 1361.4,1189.0 1365.1,1186.8 1369.1,1184.9 1373.3,1183.4 1377.5,1182.3 1381.9,1181.6 1386.4,1181.3 1392.4,1181.6 1396.4,1182.2 1400.5,1183.2 1404.8,1184.5 1412.0,1187.2 1418.1,1186.2 1435.9,1168.6 1440.3,1163.4 1438.0,1149.1 1438.3,1143.3 1439.1,1137.8 1440.2,1132.8 1441.8,1128.1 1443.6,1123.9 1445.8,1120.0 1448.3,1116.5 1451.1,1113.3 1454.1,1110.4 1457.4,1107.8 1460.8,1105.6 1464.4,1103.6 1464.0,1090.3 1457.4,1093.4 1454.1,1095.2 1450.9,1097.3 1447.8,1099.7Z" fill="none" stroke="#2e2e2e" stroke-width="1.45"/>
<rect x="257" y="433" width="1224" height="792" fill="none" stroke="#8a8a8a" stroke-width="2.2"/>
<path d="M820,829.7H920M870,780V880" stroke="#a3a3a3" stroke-width="2" fill="none"/>
<path d="M870,435.7V1214" stroke="#555" stroke-width="2" stroke-dasharray="19.5,20.33"/>
<rect x="246.5" y="422.5" width="21" height="21" fill="#fff" stroke="#808080" stroke-width="2.3"/>
<rect x="1470.5" y="422.5" width="21" height="21" fill="#fff" stroke="#808080" stroke-width="2.3"/>
<rect x="246.5" y="1214.5" width="21" height="21" fill="#fff" stroke="#808080" stroke-width="2.3"/>
<rect x="1470.5" y="1214.5" width="21" height="21" fill="#fff" stroke="#808080" stroke-width="2.3"/>
<rect x="766" y="1240" width="208" height="43" rx="5" fill="#262626"/>
<text x="791.0" y="1271.0" font-size="24.71" fill="#fff" font-weight="normal" textLength="157.0" lengthAdjust="spacingAndGlyphs" >8.5&#160;&#160;in x 5.5&#160;&#160;in</text>
<rect x="205" y="1626" width="237" height="68" rx="34" fill="#e6e6e6" fill-opacity="0.75"/>
<circle cx="237.6" cy="1659.5" r="18" fill="none" stroke="#c3c3c3" stroke-width="3"/>
<path d="M228,1659.5H247" stroke="#c3c3c3" stroke-width="3"/>
<text x="273.0" y="1673.4" font-size="40.70" fill="#c4c4c4" font-weight="normal" textLength="101.4" lengthAdjust="spacingAndGlyphs" stroke="#c4c4c4" stroke-width="1.6">100%</text>
<circle cx="409" cy="1659.5" r="18" fill="none" stroke="#c3c3c3" stroke-width="3"/>
<path d="M399.5,1659.5H418.5M409,1650V1669" stroke="#c3c3c3" stroke-width="3"/>
</svg>
<svg class="full" width="2736" height="1747" viewBox="0 0 2736 1747" style="position:absolute;left:0;top:0">
<path d="M56,31.5 Q57,31.5 58,32.3 L71,43.5 Q72,44.5 72,46 V62 Q72,66 68,66 H44 Q40,66 40,62 V46 Q40,44.5 41,43.5 L54,32.3 Q55,31.5 56,31.5Z" fill="#0e7e5d"/>
<path d="M48,55.5 Q56,60.5 64,55.5" stroke="#fff" stroke-width="3.2" fill="none" stroke-linecap="round"/>
<text x="97.2" y="59.0" font-size="29.80" fill="#111" font-weight="normal" textLength="78.3" lengthAdjust="spacingAndGlyphs" stroke="#111" stroke-width="0.5">Home</text>
<text x="256.5" y="59.0" font-size="29.80" fill="#111" font-weight="normal" textLength="97.0" lengthAdjust="spacingAndGlyphs" stroke="#111" stroke-width="0.5">Canvas</text>
<circle cx="1636" cy="42" r="4.2" fill="#111"/>
<circle cx="1652" cy="42" r="4.2" fill="#111"/>
<circle cx="1668" cy="42" r="4.2" fill="#111"/>
<text x="1734.0" y="55.6" font-size="29.07" fill="#111" font-weight="normal" textLength="58.0" lengthAdjust="spacingAndGlyphs" >Help</text>
<circle cx="1825" cy="43.9" r="18" fill="none" stroke="#111" stroke-width="3"/>
<path d="M1821,39.8 A4.3,4.3 0 1 1 1827.6,43.4 Q1825.1,45 1825.1,47.6" stroke="#111" stroke-width="2.9" fill="none" stroke-linecap="round"/><circle cx="1825" cy="51.8" r="1.9" fill="#111"/>
<rect x="1881" y="20" width="84" height="47.5" rx="8" fill="#1a7fe3"/>
<text x="1898.0" y="53.0" font-size="24.71" fill="#fff" font-weight="bold" textLength="50.5" lengthAdjust="spacingAndGlyphs" >Beta</text>
<path d="M2028.5,25V29 M2013,56.5 Q2018.5,51 2018.5,43 Q2018.5,29.5 2028.5,29.5 Q2038.5,29.5 2038.5,43 Q2038.5,51 2044,56.5 Z M2024,57 Q2024,62 2028.5,62 Q2033,62 2033,57" fill="none" stroke="#111" stroke-width="3" stroke-linejoin="round" stroke-linecap="round"/>
<circle cx="2125.2" cy="43.7" r="31.3" fill="#fdfafd" stroke="#ddd0dc" stroke-width="1.2"/>
<path d="M2099.4,40.5 A26,26 0 0 0 2144,61.6" fill="none" stroke="#a83f8c" stroke-width="5.5"/>
<path d="M2100.5,33 A26,26 0 0 1 2110,22" fill="none" stroke="#c9a3c0" stroke-width="4.5" stroke-dasharray="3,3"/>
<path d="M2143,20 l2.5,2.5 -2.5,2.5 -2.5,-2.5z" fill="#e8dc40"/><path d="M2147,25.5 l2.5,2.5 -2.5,2.5 -2.5,-2.5z" fill="#5cc0e6"/><path d="M2149.5,30 l3,3 -3,3 -3,-3z" fill="#8cc060"/><path d="M2152.5,36 l3,3 -3,3 -3,-3z" fill="#c9a3c0"/><path d="M2152.5,45 l2.5,2.5 -2.5,2.5 -2.5,-2.5z" fill="#d8b8d0"/>
<path d="M2125,15 Q2113,15 2112.5,26 Q2112,34 2115,40 L2119,34 L2125,21Z" fill="#f24f9e"/>
<path d="M2125,15 Q2137.5,15 2137.8,26 Q2138,34 2135.5,40 L2131,34 L2125,21Z" fill="#3f9fd8"/>
<ellipse cx="2125" cy="27" rx="6.3" ry="5" fill="#f2caa4"/>
<rect x="2119.8" y="31.5" width="10.3" height="15.5" rx="2" fill="#29a8c4"/>
<path d="M2119,47 H2131 L2132.5,52 H2117.5Z" fill="#f24f9e"/>
<path d="M2110,54 H2141" stroke="#555" stroke-width="1.6" stroke-dasharray="2,1"/>
<rect x="2121" y="56" width="2.6" height="8" fill="#e8b0c8"/><rect x="2127" y="56" width="2.6" height="8" fill="#e8b0c8"/>
<rect x="2118" y="63.2" width="6" height="4" rx="1.5" fill="#2f8fb0"/><rect x="2126.4" y="63.2" width="6" height="4" rx="1.5" fill="#2f8fb0"/>
<text x="2190.0" y="54.5" font-size="29.07" fill="#111" font-weight="normal" textLength="165.5" lengthAdjust="spacingAndGlyphs" >Digital Gems</text>
<path d="M2375,39 L2388,52 L2401,39" fill="none" stroke="#111" stroke-width="3.5" stroke-linecap="round" stroke-linejoin="round"/>
<path d="M2506,41H2526" stroke="#222" stroke-width="1.6"/>
<rect x="2594.5" y="33" width="18.5" height="18" rx="2" fill="none" stroke="#222" stroke-width="1.6"/>
<path d="M2682.5,32.5L2702,52M2702,32.5L2682.5,52" stroke="#222" stroke-width="1.6"/>
<text x="49.0" y="166.3" font-size="43.17" fill="#1a1a1a" font-weight="normal" textLength="313.5" lengthAdjust="spacingAndGlyphs" stroke="#1a1a1a" stroke-width="0.6">Untitled Project*</text>
<text x="1919.0" y="163.0" font-size="28.34" fill="#1a1a1a" font-weight="normal" textLength="60.5" lengthAdjust="spacingAndGlyphs" >Save</text>
<path d="M2027.5,150.5 L2032.5,137.5 H2055.5 L2060.5,150.5 V164.5 H2027.5 Z M2027.5,150.5 H2037 Q2044,160 2051,150.5 H2060.5" fill="none" stroke="#111" stroke-width="3.2" stroke-linejoin="round"/>
<text x="2078.0" y="163.0" font-size="29.07" fill="#1a1a1a" font-weight="normal" textLength="105.5" lengthAdjust="spacingAndGlyphs" >My Stuff</text>
<path d="M2230.5,152 Q2230.5,141.5 2240,141.5 H2256 Q2265,141.5 2265,152 V157 Q2265,160.5 2261.5,160.5 H2257 Q2256,156.5 2253,156.5 H2243 Q2240,156.5 2239,160.5 H2234 Q2230.5,160.5 2230.5,157 Z M2231,151 H2265" fill="none" stroke="#111" stroke-width="3.2" stroke-linejoin="round"/>
<text x="2282.0" y="163.0" font-size="29.07" fill="#1a1a1a" font-weight="normal" textLength="101.5" lengthAdjust="spacingAndGlyphs" >Maker 3</text>
<rect x="2424" y="112" width="264" height="80" rx="40" fill="#03865f"/>
<path d="M2491,140 Q2510,138 2530,140 Q2570,135 2616,138 V175 Q2580,176 2560,173 Q2530,172 2515,176 Q2500,177 2491,176 Z" fill="#008a00"/>
<text x="2521.0" y="163.0" font-size="29.07" fill="#ffff00" font-weight="bold" textLength="70.0" lengthAdjust="spacingAndGlyphs" >Make</text>
<path d="M186,265 H200.5 Q211,265 211,274.5 Q211,284 200.5,284 H188 M186,256.5 L177.5,265 L186,273.5" fill="none" stroke="#333a44" stroke-width="3.5" stroke-linecap="round" stroke-linejoin="round"/>
<path d="M278,265 H263.5 Q253,265 253,274.5 Q253,284 263.5,284 H276 M278,256.5 L286.5,265 L278,273.5" fill="none" stroke="#c9c9c9" stroke-width="3.5" stroke-linecap="round" stroke-linejoin="round"/>
<rect x="322.0" y="232.5" width="2" height="67" fill="#d3d3d3"/>
<rect x="598.0" y="232.5" width="2" height="67" fill="#d3d3d3"/>
<rect x="823.0" y="232.5" width="2" height="67" fill="#d3d3d3"/>
<rect x="1126.0" y="232.5" width="2" height="67" fill="#d3d3d3"/>
<rect x="1243.0" y="232.5" width="2" height="67" fill="#d3d3d3"/>
<rect x="1436.0" y="232.5" width="2" height="67" fill="#d3d3d3"/>
<rect x="1560.0" y="232.5" width="2" height="67" fill="#d3d3d3"/>
<rect x="1931.0" y="232.5" width="2" height="67" fill="#d3d3d3"/>
<text x="355.0" y="250.3" font-size="21.80" fill="#333a44" font-weight="normal" textLength="92.5" lengthAdjust="spacingAndGlyphs" >Operation</text>
<rect x="355" y="264" width="167.5" height="32.5" rx="4" fill="#fff" stroke="#d0d0d0" stroke-width="2"/>
<text x="367.0" y="287.8" font-size="21.08" fill="#333a44" font-weight="normal" textLength="74.5" lengthAdjust="spacingAndGlyphs" >Multiple</text>
<path d="M500,275 H511.7 L505.85,284.8Z" fill="#333a44"/>
<rect x="535" y="264" width="33.5" height="32.5" rx="3" fill="#fff" stroke="#d6d6d6" stroke-width="2"/>
<path d="M538.8,292.7 L564.7,267.3" stroke="#d6390f" stroke-width="5.2" stroke-linecap="round"/>
<text x="630.8" y="249.8" font-size="21.80" fill="#333a44" font-weight="normal" textLength="79.9" lengthAdjust="spacingAndGlyphs" >Deselect</text>
<rect x="656" y="267" width="30.5" height="30" rx="4" fill="none" stroke="#333a44" stroke-width="2.6" stroke-dasharray="6.5,5" stroke-dashoffset="-3"/>
<circle cx="665.1" cy="275.9" r="3.1" fill="none" stroke="#333a44" stroke-width="2"/><circle cx="676.7" cy="275.9" r="3.1" fill="none" stroke="#333a44" stroke-width="2"/><circle cx="665.1" cy="287.9" r="3.1" fill="none" stroke="#333a44" stroke-width="2"/>
<path d="M673.2,284.2 L685.8,288.6 L680,290.5 L677.5,296.9Z" fill="#333a44" stroke="#fff" stroke-width="0.8"/>
<text x="750.0" y="249.8" font-size="21.80" fill="#333a44" font-weight="normal" textLength="34.5" lengthAdjust="spacingAndGlyphs" >Edit</text>
<path d="M745.5,295.5 L748.5,284.5 L767.5,265.5 Q769.5,263.8 771.5,265.5 L774.8,268.8 Q776.5,270.8 774.8,272.8 L755.8,291.8 Z M748.5,284.5 L755.8,291.8" fill="none" stroke="#333a44" stroke-width="2.6" stroke-linejoin="round"/>
<path d="M783.2,277.3 H794.5 L788.8,286.2Z" fill="#333a44"/>
<text x="860.4" y="249.8" font-size="21.80" fill="#c6c6c6" font-weight="normal" textLength="46.0" lengthAdjust="spacingAndGlyphs" >Align</text>
<path d="M862.8,270V295" stroke="#c9c9c9" stroke-width="2.5" stroke-linecap="round"/><rect x="869.5" y="276" width="20" height="11.5" rx="3" fill="none" stroke="#c9c9c9" stroke-width="2.5"/><path d="M899,277.3 H910 L904.5,286.2Z" fill="#c9c9c9"/>
<text x="940.5" y="249.8" font-size="21.80" fill="#333a44" font-weight="normal" textLength="73.3" lengthAdjust="spacingAndGlyphs" >Arrange</text>
<path d="M945.5,281 V268.5 H959 M952.5,273.5 H966.5 V287.5 H952.5 Z M973,284.5 V296 H959.5" fill="none" stroke="#333a44" stroke-width="2.6"/>
<path d="M983.5,277.3 H994.5 L989,286.2Z" fill="#333a44"/>
<text x="1054.5" y="249.8" font-size="21.80" fill="#333a44" font-weight="normal" textLength="32.0" lengthAdjust="spacingAndGlyphs" >Flip</text>
<path d="M1048.5,295.5 L1060,267 V295.5Z M1064.8,267 L1076,295.5 H1064.8Z" fill="none" stroke="#333a44" stroke-width="2.6" stroke-linejoin="round"/>
<path d="M1086.5,277.3 H1098 L1092.25,286.2Z" fill="#333a44"/>
<text x="1159.3" y="249.7" font-size="21.80" fill="#333a44" font-weight="normal" textLength="54.7" lengthAdjust="spacingAndGlyphs" >Offset</text>
<path d="M1178,266.5 L1193.5,277.8 L1187.5,297.5 H1168.5 L1162.5,277.8Z" fill="none" stroke="#333a44" stroke-width="2.6" stroke-dasharray="5,3.2" stroke-linejoin="round"/>
<path d="M1177.5,275 L1185.5,281 L1182.5,290.5 H1172.5 L1169.5,281Z" fill="none" stroke="#333a44" stroke-width="2.6" stroke-linejoin="round"/>
<path d="M1202.6,277 H1213.5 L1208,286.6Z" fill="#333a44"/>
<text x="1276.0" y="249.7" font-size="21.80" fill="#333a44" font-weight="normal" textLength="131.4" lengthAdjust="spacingAndGlyphs" >Create Sticker</text>
<path d="M1334,304 Q1315.5,302 1315.5,285.5 Q1315.5,267.5 1333.8,267.5 Q1351.5,267.5 1352,285.5 Q1344,285.5 1338.5,291 Q1333.5,296.5 1334,304 Z M1334,304 Q1345,296 1352,285.5" fill="none" stroke="#333a44" stroke-width="2.8" stroke-linejoin="round"/>
<path d="M1362,280.8 H1374 L1368,290.3Z" fill="#333a44"/>
<text x="1476.3" y="249.7" font-size="21.80" fill="#333a44" font-weight="normal" textLength="47.5" lengthAdjust="spacingAndGlyphs" >Warp</text>
<path d="M1473,275 Q1492,279 1511,275 Q1508,285.5 1511,296.5 Q1492,292.5 1473,296.5 Q1476,285.5 1473,275 Z M1485.5,277.5 V294 M1498.5,277.5 V294" fill="none" stroke="#333a44" stroke-width="2.6" stroke-linejoin="round"/>
<path d="M1520,280.8 H1531.5 L1525.75,290.3Z" fill="#333a44"/>
<text x="1593.0" y="250.5" font-size="21.80" fill="#333a44" font-weight="normal" textLength="37.0" lengthAdjust="spacingAndGlyphs" >Size</text>
<text x="1593.0" y="288.0" font-size="21.08" fill="#333a44" font-weight="normal" textLength="16.5" lengthAdjust="spacingAndGlyphs" >W</text>
<rect x="1622.5" y="263.8" width="110.5" height="32.5" rx="6" fill="#fff" stroke="#d3d3d3" stroke-width="2"/><path d="M1708,264V296" stroke="#d3d3d3" stroke-width="2"/>
<text x="1633.0" y="288.5" font-size="21.80" fill="#333a44" font-weight="normal" textLength="30.0" lengthAdjust="spacingAndGlyphs" >8.5</text>
<path d="M1714.7,277.5 L1720.85,269 L1727,277.5Z M1714.7,281.5 H1727 L1720.85,291Z" fill="#333a44"/>
<text x="1765.6" y="288.0" font-size="21.08" fill="#333a44" font-weight="normal" textLength="12.4" lengthAdjust="spacingAndGlyphs" >H</text>
<rect x="1791" y="263.8" width="110.5" height="32.5" rx="6" fill="#fff" stroke="#d3d3d3" stroke-width="2"/><path d="M1876,264V296" stroke="#d3d3d3" stroke-width="2"/>
<text x="1802.0" y="288.5" font-size="21.80" fill="#333a44" font-weight="normal" textLength="29.0" lengthAdjust="spacingAndGlyphs" >5.5</text>
<path d="M1883,277.5 L1889.15,269 L1895.3,277.5Z M1883,281.5 H1895.3 L1889.15,291Z" fill="#333a44"/>
<path d="M1738.5,260 V253 H1750.5 M1783.5,253 H1791.5 V260" fill="none" stroke="#b5b5b5" stroke-width="1.6"/>
<path d="M1761.5,246 V242 Q1761.5,237.5 1766.9,237.5 Q1772.3,237.5 1772.3,242 V246" fill="none" stroke="#333a44" stroke-width="2.8"/>
<rect x="1758.5" y="246" width="17" height="14.5" rx="2.5" fill="none" stroke="#333a44" stroke-width="2.8"/><path d="M1766.9,250.5V254.5" stroke="#333a44" stroke-width="2.8" stroke-linecap="round"/>
<text x="1948.0" y="273.8" font-size="21.80" fill="#111" font-weight="normal" textLength="46.0" lengthAdjust="spacingAndGlyphs" >More</text>
<path d="M1999,264.7 H2015 L2007,272.6Z" fill="#111"/>
</svg>
<svg class="full" width="2736" height="1747" viewBox="0 0 2736 1747" style="position:absolute;left:0;top:0">
<circle cx="70.1" cy="275.8" r="18" stroke="#333a44" stroke-width="3.2" fill="none" stroke-linejoin="round" stroke-linecap="round"/><path d="M61,275.8H79.2M70.1,266.7V284.9" stroke="#333a44" stroke-width="3.2" fill="none" stroke-linejoin="round" stroke-linecap="round"/>
<text x="50.8" y="323.7" font-size="20.64" fill="#333a44" font-weight="normal" textLength="39.2" lengthAdjust="spacingAndGlyphs" >New</text>
<path d="M62.3,393 Q69.7,397 77.1,393 L89,403 L85.4,409 L80.5,405.5 V429 Q69.7,431 59.2,429 V405.5 L54.3,409 L50.7,403 Z" stroke="#333a44" stroke-width="3.2" fill="none" stroke-linejoin="round" stroke-linecap="round"/>
<path d="M65.4,406.4V403.2H68.5M71.9,403.2H75V406.4M75,409.6V412.8H71.9M68.5,412.8H65.4V409.6" stroke="#333a44" stroke-width="2.2" fill="none" stroke-linecap="butt" stroke-linejoin="miter"/>
<text x="23.0" y="459.7" font-size="20.64" fill="#333a44" font-weight="normal" textLength="94.3" lengthAdjust="spacingAndGlyphs" >Templates</text>
<path d="M58,535 L77,529.5 Q79.5,529 79.5,531.5 V534.5 M59.5,534.5 H80.5 Q83,534.5 83,537 V564.5 Q83,567 80.5,567 H59.5 Q57,567 57,564.5 V537 Q57,534.5 59.5,534.5Z" stroke="#333a44" stroke-width="3.2" fill="none" stroke-linejoin="round" stroke-linecap="round"/>
<path d="M70,552 L64,546 Q62,543 64.5,540.5 Q67.5,538.5 70,541.5 Q72.5,538.5 75.5,540.5 Q78,543 76,546Z" stroke="#333a44" stroke-width="2.8" fill="none" stroke-linejoin="round" stroke-linecap="round"/>
<path d="M63,558.5H77.5" stroke="#333a44" stroke-width="3.2" fill="none" stroke-linejoin="round" stroke-linecap="round"/>
<text x="33.5" y="596.0" font-size="20.64" fill="#333a44" font-weight="normal" textLength="73.7" lengthAdjust="spacingAndGlyphs" >Projects</text>
<rect x="16" y="652" width="106" height="2" fill="#cfcfcf"/>
<path d="M75.25,727.64 A11.5,11.5 0 1 1 65.6,737.5" stroke="#333a44" stroke-width="3.2" fill="none" stroke-linejoin="round" stroke-linecap="round"/>
<path d="M66.3,713.5 L81.5,737.5 H51 Z" stroke="#333a44" stroke-width="3.2" fill="none" stroke-linejoin="round" stroke-linecap="round"/>
<text x="36.0" y="779.2" font-size="20.64" fill="#333a44" font-weight="normal" textLength="67.7" lengthAdjust="spacingAndGlyphs" >Shapes</text>
<path d="M65,879 L57.5,866 Q55.5,861.5 55.5,860 Q55.5,848.5 69.8,848.5 Q84,848.5 84,860 Q84,861.5 82,866 L74.5,879 Z M69.8,848.5 Q63,856 63,862.5 Q63,871 69.8,877 Q76.5,871 76.5,862.5 Q76.5,856 69.8,848.5 Z" stroke="#333a44" stroke-width="3.2" fill="none" stroke-linejoin="round" stroke-linecap="round"/>
<rect x="65.5" y="879" width="8.5" height="7" stroke="#333a44" stroke-width="3.2" fill="none" stroke-linejoin="round" stroke-linecap="round"/>
<text x="36.5" y="915.8" font-size="20.64" fill="#333a44" font-weight="normal" textLength="66.7" lengthAdjust="spacingAndGlyphs" >Images</text>
<path d="M57,998.5 V991.5 H83 V998.5 M70,991.5 V1017 M62,1017 H78" stroke="#333a44" stroke-width="3.2" fill="none" stroke-linejoin="round" stroke-linecap="round"/>
<text x="51.9" y="1052.0" font-size="20.64" fill="#333a44" font-weight="normal" textLength="36.2" lengthAdjust="spacingAndGlyphs" >Text</text>
<path d="M51,1123 H89 M51.5,1130 V1150 M51.5,1130 H71.5 M60.5,1131 V1154 M69,1131 V1158 M73,1130 H89 V1137 M78.5,1158 V1139 M78.5,1158 Q89,1155 89,1145 V1141 H83" stroke="#333a44" stroke-width="3.2" fill="none" stroke-linejoin="round" stroke-linecap="round"/>
<text x="20.2" y="1188.4" font-size="20.64" fill="#333a44" font-weight="normal" textLength="100.3" lengthAdjust="spacingAndGlyphs" >Monogram</text>
<rect x="16" y="1244" width="106" height="2" fill="#cfcfcf"/>
<path d="M57.5,1313 V1309.5 H83 V1313 M70,1339 V1318 M61,1327 L70,1318 L79,1327" stroke="#333a44" stroke-width="3.2" fill="none" stroke-linejoin="round" stroke-linecap="round"/>
<text x="37.7" y="1371.6" font-size="20.64" fill="#333a44" font-weight="normal" textLength="64.7" lengthAdjust="spacingAndGlyphs" >Upload</text>
<text x="2169.0" y="274.4" font-size="29.07" fill="#0a7458" font-weight="bold" textLength="85.3" lengthAdjust="spacingAndGlyphs" >Layers</text>
<text x="2319.5" y="274.2" font-size="29.07" fill="#2a2a2a" font-weight="normal" textLength="142.8" lengthAdjust="spacingAndGlyphs" >Color Sync</text>
<rect x="2136" y="310" width="600" height="2" fill="#e3e3e3"/>
<rect x="2136" y="305" width="151" height="6" fill="#0a7458"/>
<path d="M2175,349.5V343H2181.5M2202.5,343H2209V349.5M2209,369.5V376H2202.5M2181.5,376H2175V369.5" stroke="#dadada" stroke-width="2.6" fill="none"/>
<path d="M2181,361 V353 Q2181,350 2184,350 H2193 Q2196,350 2196,353 V356 M2188,356 H2200 Q2203,356 2203,359 V367 Q2203,370 2200,370 H2188 Q2185,370 2185,367 V359 Q2185,356 2188,356Z" stroke="#dadada" stroke-width="2.6" fill="none"/>
<path d="M2255.5,368 V343 H2281 V349 M2263,349.5 H2289 V377 H2263 Z M2276,355.5 V371 M2268.5,363.2 H2283.5" stroke="#333" stroke-width="3" fill="none"/>
<path d="M2333,349.5 H2371.5 M2345.5,349 V343 H2358.5 V349 M2338,349.5 L2341,374 Q2341.5,376.5 2344,376.5 H2360 Q2362.5,376.5 2363,374 L2366,349.5 M2347.5,356.5 V368 M2356.5,356.5 V368" stroke="#333" stroke-width="3" fill="none" stroke-linejoin="round"/>
<rect x="2136" y="410" width="600" height="2" fill="#e6e6e6"/>
<rect x="2702" y="412" width="34" height="1029" fill="#f1f1f1"/>
<path d="M2711,434 L2719,426 L2727,434Z" fill="#a5a5a5"/>
<path d="M2711,1422 H2727.6 L2719.3,1430Z" fill="#8c8c8c"/>
<rect x="2144" y="418" width="550" height="112" rx="7" fill="#b9eee0"/>
<path d="M2171.2,460 L2181.2,469.1 L2171.2,477.8" stroke="#263a35" stroke-width="2.8" fill="none" stroke-linecap="round" stroke-linejoin="round"/>
<path d="M2242.6,461.4 H2221.5 A9.55,9.55 0 0 0 2221.5,480.5 H2244.3 A6.55,6.55 0 0 0 2244.3,467.4 H2224.5 A3.55,3.55 0 0 0 2224.5,474.5 H2240.6" stroke="#2c3633" stroke-width="2.8" fill="none" stroke-linecap="round"/>
<text x="2273.5" y="483.0" font-size="29.80" fill="#2f2f2f" font-weight="bold" textLength="86.2" lengthAdjust="spacingAndGlyphs" >Attach</text>
<rect x="2136" y="1441" width="600" height="101" fill="#f3f3f3"/>
<rect x="2157.5" y="1456.5" width="103" height="70.5" rx="4" fill="#fff" stroke="#737373" stroke-width="2"/>
<text x="2283.0" y="1500.3" font-size="21.22" fill="#1e1e1e" font-weight="normal" textLength="123.0" lengthAdjust="spacingAndGlyphs" >Blank Canvas</text>
<path d="M2211.3,1564 A12,12 0 1 0 2200,1578.5" stroke="#b8b8b8" stroke-width="3" fill="none"/>
<path d="M2201,1564 H2222 V1589 H2201 V1574" stroke="#b8b8b8" stroke-width="3" fill="none"/><path d="M2201,1567 H2210.5 Q2209,1575 2201,1577Z" stroke="#b8b8b8" stroke-width="3" fill="none" stroke-linejoin="round"/>
<text x="2182.7" y="1622.0" font-size="20.78" fill="#b8b8b8" font-weight="normal" textLength="44.7" lengthAdjust="spacingAndGlyphs" >Slice</text>
<rect x="2295" y="1555" width="22" height="22" stroke="#b8b8b8" stroke-width="3" fill="none"/><circle cx="2317" cy="1577" r="12.2" stroke="#b8b8b8" stroke-width="3" fill="none"/><path d="M2340.5,1571.4 H2355.4 L2348,1579Z" fill="#b8b8b8"/>
<text x="2280.7" y="1622.0" font-size="20.78" fill="#b8b8b8" font-weight="normal" textLength="84.1" lengthAdjust="spacingAndGlyphs" >Combine</text>
<path d="M2419.3,1557 L2450.6,1588.8 M2421.8,1562 A9.5,9.5 0 0 0 2426.5,1580.4 H2441.5 M2425.4,1566.8 A3.9,3.9 0 0 0 2426.5,1574.3 H2435 M2431.5,1561.4 H2446.5 M2439.3,1567.5 H2448.3 A6.45,6.45 0 0 1 2449.3,1580.4" stroke="#111" stroke-width="2.6" fill="none" stroke-linecap="round"/>
<text x="2404.0" y="1622.0" font-size="20.78" fill="#111" font-weight="normal" textLength="64.4" lengthAdjust="spacingAndGlyphs" >Detach</text>
<path d="M2550,1553 V1568 M2544,1562.5 L2550,1568.5 L2556,1562.5 M2541,1563 L2534,1567.5 L2550,1578 L2566,1567.5 L2559,1563 M2534,1577 L2550,1588 L2566,1577" stroke="#b8b8b8" stroke-width="3" fill="none" stroke-linejoin="round" stroke-linecap="round"/>
<text x="2518.6" y="1622.0" font-size="20.78" fill="#b8b8b8" font-weight="normal" textLength="61.9" lengthAdjust="spacingAndGlyphs" >Flatten</text>
<circle cx="2666.8" cy="1571.8" r="18.5" stroke="#b8b8b8" stroke-width="3" fill="none" stroke-dasharray="6,4.8"/>
<text x="2629.0" y="1622.0" font-size="20.78" fill="#b8b8b8" font-weight="normal" textLength="76.0" lengthAdjust="spacingAndGlyphs" >Contour</text>
<rect x="2136" y="1639" width="600" height="105" fill="#1249c6"/>
<path d="M2168,1668 H2232 L2221.5,1709.5 H2180 L2180,1721.5 L2168,1709.5 Z" fill="#0aa66b"/>
<path d="M2180,1709.5 V1721.5 L2168,1709.5Z" fill="#078a55"/>
<path d="M2187,1683 Q2189,1677 2196,1677 Q2204,1677 2204,1685 V1699 M2204,1692 Q2204,1699 2196,1699 Q2187,1699 2187,1692 Q2187,1686 2196,1686 Q2204,1686 2204,1692" stroke="#fff" stroke-width="3.2" fill="none" stroke-linecap="round"/>
<text x="2249.0" y="1703.0" font-size="29.80" fill="#fff" font-weight="normal" textLength="330.0" lengthAdjust="spacingAndGlyphs" >Try Cricut Access for free</text>
<rect x="0" y="1744" width="97" height="3" fill="#262a22"/><rect x="97" y="1744" width="573" height="3" fill="#c9c9c9"/><rect x="670" y="1744" width="296" height="3" fill="#1e2a2c"/><rect x="966" y="1744" width="96" height="3" fill="#5a5f66"/><rect x="1062" y="1744" width="1674" height="3" fill="#1f2428"/>
</svg>
</body></html>
